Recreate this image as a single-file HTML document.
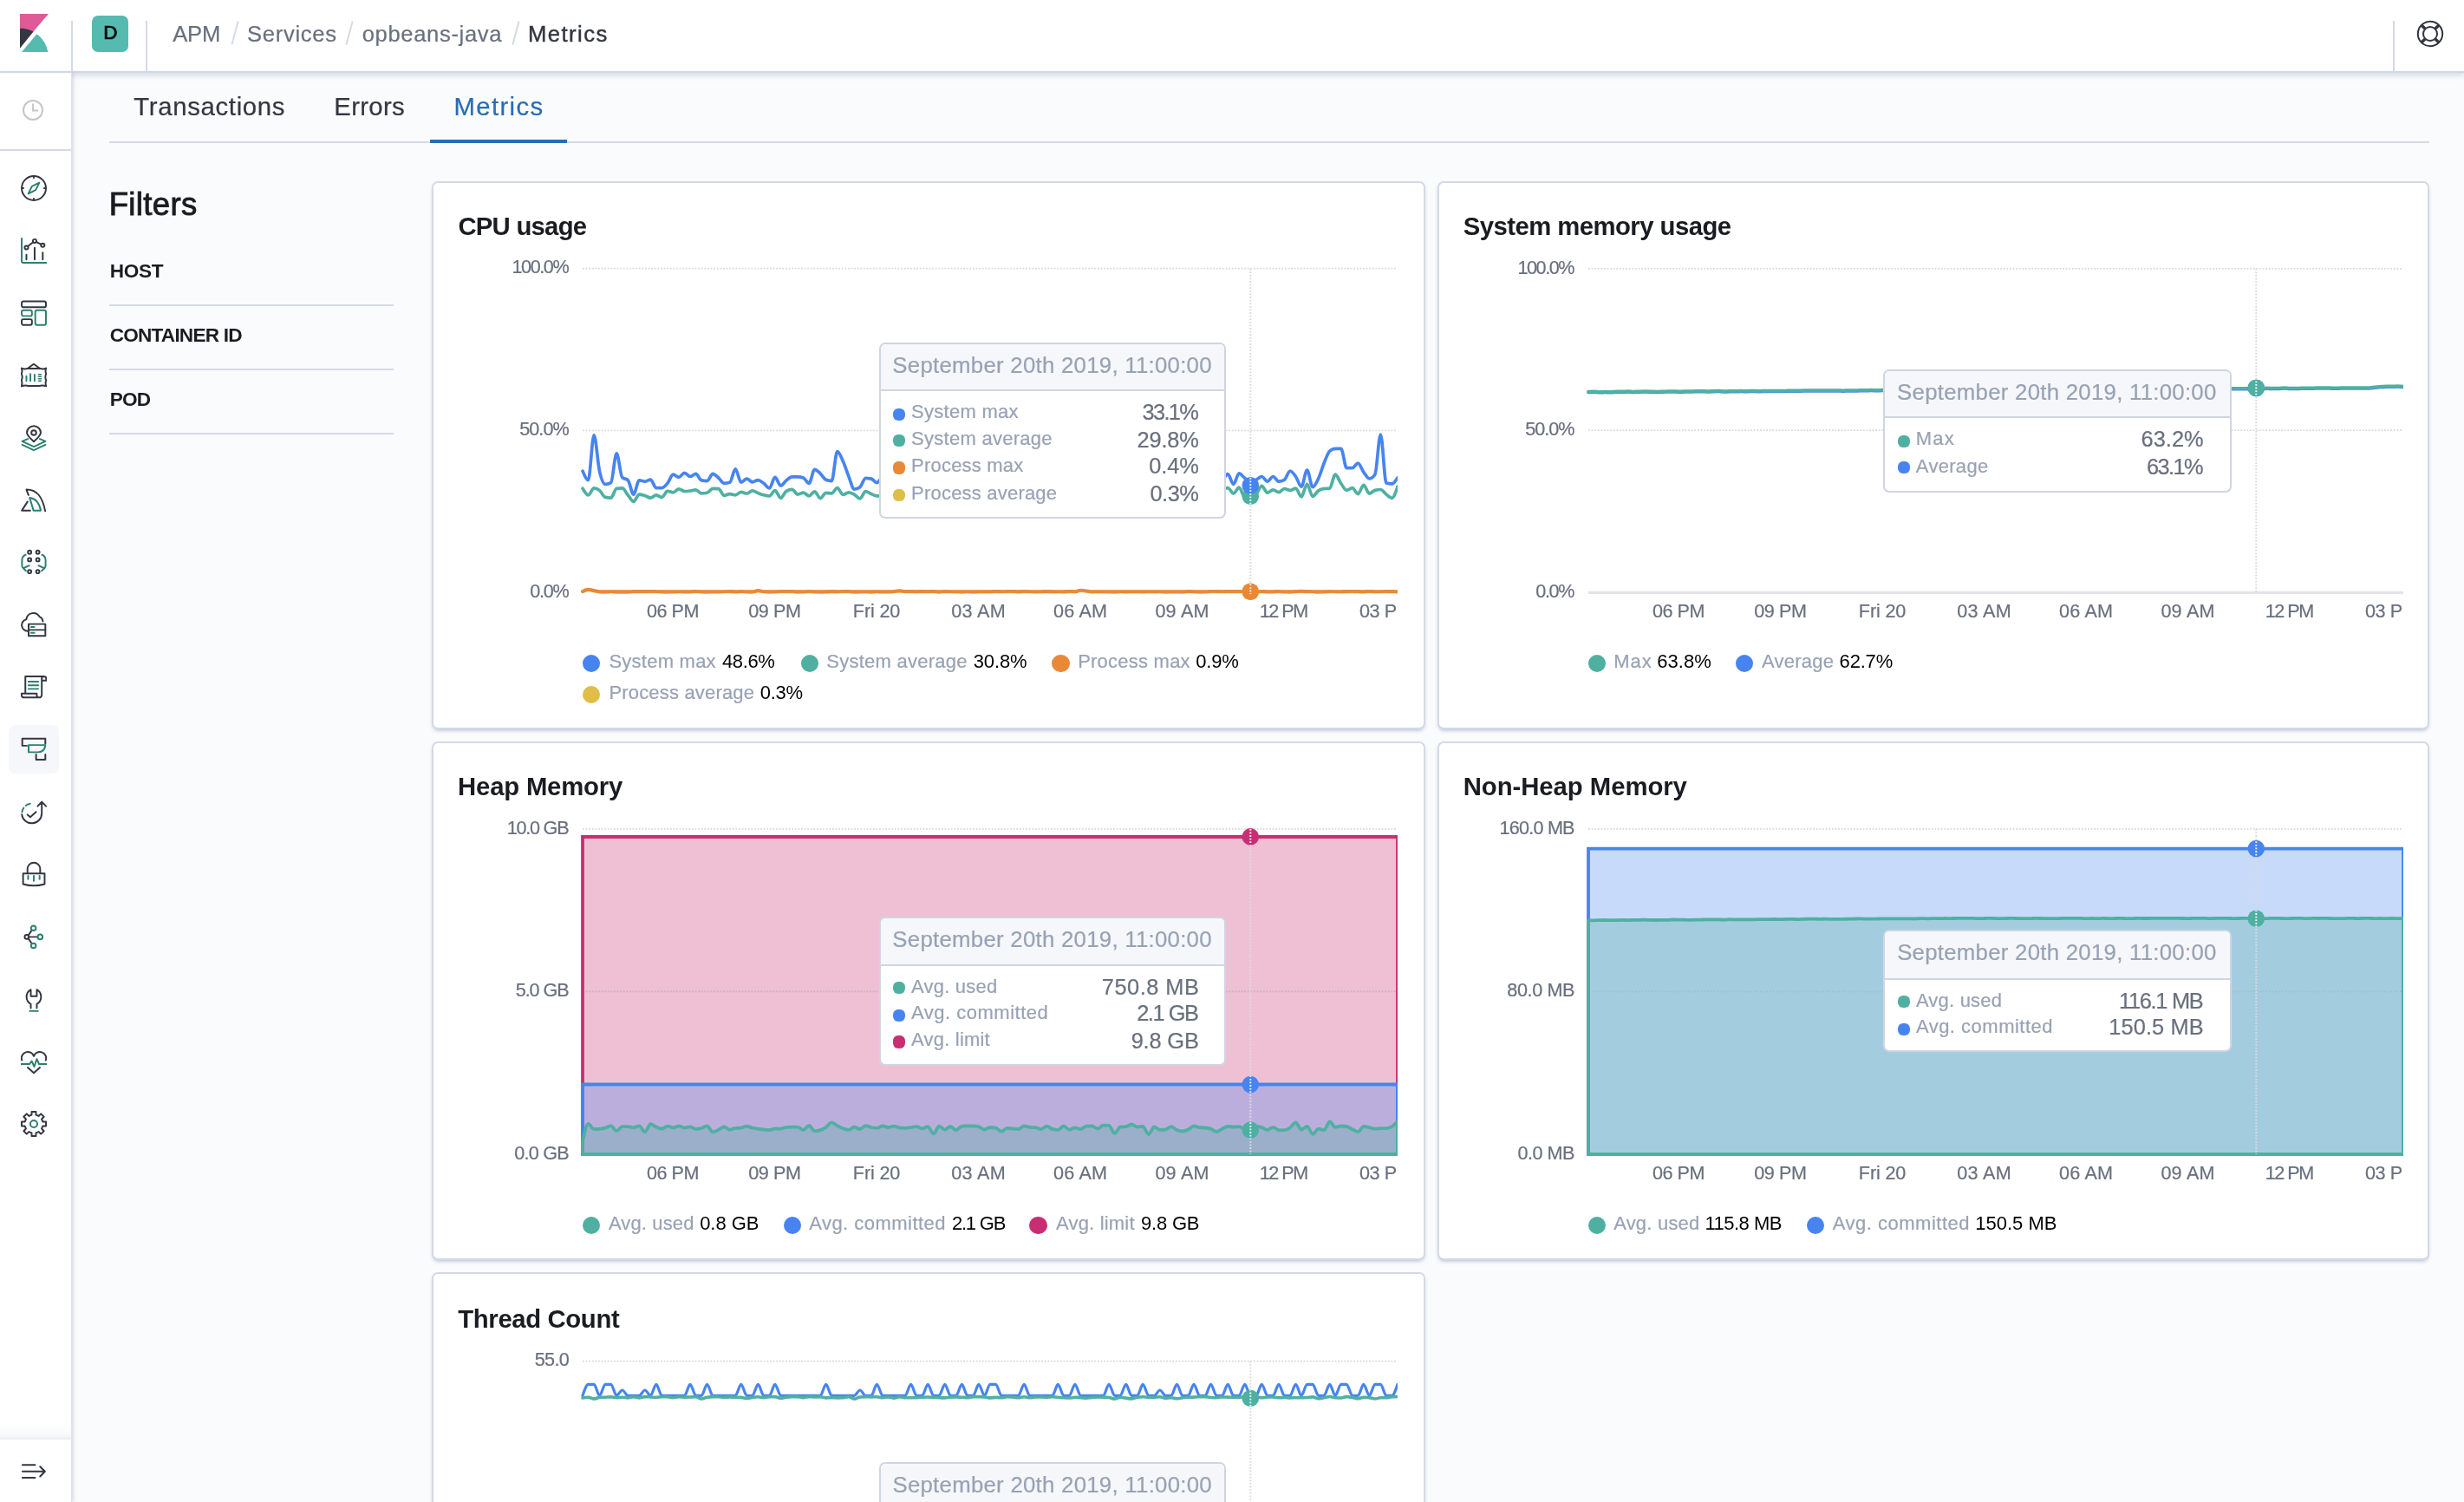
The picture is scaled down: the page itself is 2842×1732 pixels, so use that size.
<!DOCTYPE html>
<html lang="en"><head><meta charset="utf-8"><title>APM - opbeans-java - Metrics</title>
<style>
html,body{margin:0;padding:0}
body{width:2842px;height:1732px;overflow:hidden;position:relative;background:#fafbfd;font-family:"Liberation Sans",sans-serif}
.t{position:absolute;white-space:nowrap;line-height:1}
</style></head>
<body>
<div id="hdr" style="position:absolute;left:0;top:0;width:2842px;height:82px;background:#fff;border-bottom:2px solid #d0d6e3;box-shadow:0 3px 6px rgba(120,135,165,.28);z-index:5"></div>
<div id="nav" style="position:absolute;left:0;top:84px;width:82px;height:1648px;background:#fff;box-shadow:1px 0 0 #dde2ec,2px 0 5px rgba(120,135,165,.35);z-index:6"></div>
<div style="position:absolute;left:0;top:82px;width:83px;height:2px;background:#d0d6e3;z-index:7"></div>
<div style="position:absolute;left:82px;top:24px;width:2px;height:59px;background:#d3dae6;z-index:8"></div>
<div style="position:absolute;left:168px;top:24px;width:2px;height:59px;background:#d3dae6;z-index:8"></div>
<div style="position:absolute;left:2760px;top:24px;width:2px;height:59px;background:#d3dae6;z-index:8"></div>
<svg style="position:absolute;left:23px;top:16px;z-index:8" width="34" height="44" viewBox="0 0 34 44">
<path d="M0 0H33L15.6 20.3C11 18 5.6 16.8 0 16.7Z" fill="#df5a96"/>
<path d="M0 16.5C5.6 16.6 11 17.9 15.7 20.2L0 39.7Z" fill="#343741"/>
<path d="M19.4 23.2C26.2 28 30.8 35.5 32.3 44H2Z" fill="#55bbb1"/>
</svg>
<div style="position:absolute;left:106px;top:18px;width:42px;height:42px;border-radius:7px;background:#55bbb1;z-index:8"></div>
<div style="position:absolute;left:269.8px;top:24px;width:2px;height:28px;background:#d3dae6;transform:rotate(15deg);z-index:9"></div>
<div style="position:absolute;left:402px;top:24px;width:2px;height:28px;background:#d3dae6;transform:rotate(15deg);z-index:9"></div>
<div style="position:absolute;left:593.6px;top:24px;width:2px;height:28px;background:#d3dae6;transform:rotate(15deg);z-index:9"></div>
<svg style="position:absolute;left:2787px;top:23px;z-index:9" width="32" height="32" viewBox="0 0 32 32" fill="none" stroke="#343741" stroke-width="2">
<circle cx="16" cy="16" r="14.2"/><circle cx="16" cy="16" r="8"/>
<path d="M6 6L10.3 10.3M26 6L21.7 10.3M6 26L10.3 21.7M26 26L21.7 21.7" stroke-width="3.4"/>
</svg>
<svg style="position:absolute;left:25px;top:114px;z-index:9" width="26" height="26" viewBox="0 0 26 26" fill="none" stroke="#c5c6c9" stroke-width="2">
<circle cx="13" cy="13" r="11"/><path d="M13.1 5.4V13.5H19.2"/></svg>
<div style="position:absolute;left:0;top:172px;width:82px;height:2px;background:#d3dae6;z-index:9"></div>
<div style="position:absolute;left:0;top:1640px;width:82px;height:20px;background:linear-gradient(to bottom,rgba(255,255,255,0) 0%,#fcfcfd 45%,#f6f7f9 78%,#ebecf0 100%);z-index:9"></div>
<svg style="position:absolute;left:24px;top:1684px;z-index:9" width="30" height="26" viewBox="0 0 30 26" fill="none" stroke="#343741" stroke-width="2.1" stroke-linecap="round" stroke-linejoin="round">
<path d="M2 5.3H16.4M2 12.8H27.4M2 20H16.4M22.3 7.3L27.8 12.8L22.3 18.4"/></svg>
<div style="position:absolute;left:10px;top:836px;width:58px;height:56px;border-radius:8px;background:#f5f7fa;z-index:9"></div>
<svg style="position:absolute;left:24px;top:202.0px;z-index:9" width="30" height="30" viewBox="0 0 32 32"><g fill="none" stroke-width="2.1" stroke-linecap="round" stroke-linejoin="round" stroke="#343741"><circle cx="16" cy="16" r="14.9"/><path d="M16 1.5V4M16 28V30.5M1.5 16H4M28 16H30.5" stroke-linecap="butt"/></g>
<path fill="none" stroke-width="2.1" stroke-linecap="round" stroke-linejoin="round" stroke="#2b8070" d="M22.8 9.2L18.3 18.3L9.2 22.8L13.7 13.7Z" fill="#2b8070" fill-opacity=".0"/></svg>
<svg style="position:absolute;left:24px;top:273.9px;z-index:9" width="30" height="30" viewBox="0 0 32 32"><path fill="none" stroke-width="2.1" stroke-linecap="round" stroke-linejoin="round" stroke="#2b8070" d="M1.1 1V28.5A2 2 0 0 0 3.1 30.9H31.3"/>
<g fill="none" stroke-width="2.1" stroke-linecap="round" stroke-linejoin="round" stroke="#343741"><path d="M6.9 21V27M17 12.5V27M27 18.5V27" /><path d="M8.6 10.6L15.2 5.6M18.9 5.2L25.2 8.4"/><circle cx="6.9" cy="12.3" r="2.2"/><circle cx="17" cy="4.2" r="2.2"/><circle cx="27" cy="9.4" r="2.2"/></g></svg>
<svg style="position:absolute;left:24px;top:345.7px;z-index:9" width="30" height="30" viewBox="0 0 32 32"><g fill="none" stroke-width="2.1" stroke-linecap="round" stroke-linejoin="round" stroke="#343741"><rect x="1.1" y="1.6" width="29.8" height="7.2" rx="2"/><rect x="1.1" y="23.6" width="12.6" height="7" rx="2"/></g>
<g fill="none" stroke-width="2.1" stroke-linecap="round" stroke-linejoin="round" stroke="#2b8070"><rect x="1.1" y="12.6" width="12.6" height="7" rx="2"/><rect x="17.8" y="12.6" width="13.1" height="18" rx="2"/></g></svg>
<svg style="position:absolute;left:24px;top:417.6px;z-index:9" width="30" height="30" viewBox="0 0 32 32"><g fill="none" stroke-width="2.1" stroke-linecap="round" stroke-linejoin="round" stroke="#343741"><path d="M8.3 7.4L15.900 1.800L23.600 7.400"/><path d="M0.800 7C3.500 8.200 6 8.200 8.300 7.400H23.600C26 8.200 28.500 8.200 31.200 7C30.200 9.500 30 11.500 31.200 14C29.800 16.500 29.800 19 31.200 22C30 24.500 30.200 26.500 31.200 29.200C28 28 25 28 22.500 28.800H9.500C7 28 4 28 0.800 29.200C1.800 26.500 2 24.500 0.800 22C2.200 19 2.200 16.500 0.800 14C2 11.500 1.800 9.500 0.800 7Z"/></g>
<g fill="none" stroke-width="2.1" stroke-linecap="round" stroke-linejoin="round" stroke="#2b8070" stroke-linecap="butt"><path d="M6.900 16.800V22.600M11.800 14.100V22.600M17 15V22.600"/><path stroke-width="1.700" d="M21.700 14.700H25M21.700 17.400H25M21.700 20H25M21.700 22.600H25"/></g></svg>
<svg style="position:absolute;left:24px;top:489.5px;z-index:9" width="30" height="30" viewBox="0 0 32 32"><g fill="none" stroke-width="2.1" stroke-linecap="round" stroke-linejoin="round" stroke="#343741"><path d="M16 20.6C10.5 15.6 7.5 12.5 7.5 9.6A8.5 8.2 0 0 1 24.5 9.6C24.500 12.500 21.500 15.600 16 20.600Z"/><circle cx="16" cy="9.6" r="3"/></g>
<g fill="none" stroke-width="2.1" stroke-linecap="round" stroke-linejoin="round" stroke="#2b8070"><path d="M8.600 17.2L1.700 20.200L16 26.800L30.300 20.200L23.400 17.200M1.700 24.500L16 31L30.300 24.500"/></g></svg>
<svg style="position:absolute;left:24px;top:561.4px;z-index:9" width="30" height="30" viewBox="0 0 32 32"><g fill="none" stroke-width="2.1" stroke-linecap="round" stroke-linejoin="round" stroke="#343741" stroke-linecap="butt"><path d="M9.4 10.5L6.9 3.8C19.500 3.600 26.500 12 30 30.200M8.200 18.800L1.300 29.500H11.600"/></g>
<path fill="none" stroke-width="2.1" stroke-linecap="round" stroke-linejoin="round" stroke="#2b8070" d="M10.900 13.900C18.500 14.500 22.500 20 24.700 29.500H15.600Z"/></svg>
<svg style="position:absolute;left:24px;top:632.4px;z-index:9" width="30" height="30" viewBox="0 0 32 32"><g fill="none" stroke-width="2.1" stroke-linecap="round" stroke-linejoin="round" stroke="#343741"><circle cx="10.800" cy="5" r="2.100"/><circle cx="20.900" cy="5" r="2.100"/><circle cx="10.800" cy="14.300" r="2.100"/><circle cx="20.900" cy="14.300" r="2.100"/><circle cx="10.800" cy="29" r="2.100"/><circle cx="20.900" cy="29" r="2.100"/></g>
<g fill="none" stroke-width="2.1" stroke-linecap="round" stroke-linejoin="round" stroke="#2b8070"><path d="M6 8.300C2.500 9.500 1.500 12 1.500 15V21.500C1.500 23 2 24 3 24.800M10.300 21.500L3 24.800L6.300 28M26 8.300C29.500 9.500 30.500 12 30.500 15V21.500C30.500 23 30 24 29 24.800M21.700 21.500L29 24.800L25.700 28"/></g></svg>
<svg style="position:absolute;left:24px;top:705.1px;z-index:9" width="30" height="30" viewBox="0 0 32 32"><g fill="none" stroke-width="2.1" stroke-linecap="round" stroke-linejoin="round" stroke="#343741" stroke-linecap="butt"><path d="M9.400 24.200H8.500A7.300 7.300 0 0 1 6.800 9.800A8.700 8.700 0 0 1 23 6.500A7 7 0 0 1 27.200 12.300"/><rect x="9.600" y="15.600" width="20.600" height="14.600"/><path d="M9.600 22.800H30.200"/></g>
<g fill="none" stroke-width="2.1" stroke-linecap="round" stroke-linejoin="round" stroke="#2b8070" stroke-linecap="butt"><path d="M12.600 19.200H16.600M12.600 26.400H16.600"/></g></svg>
<svg style="position:absolute;left:24px;top:776.2px;z-index:9" width="30" height="30" viewBox="0 0 32 32"><g fill="none" stroke-width="2.1" stroke-linecap="round" stroke-linejoin="round" stroke="#343741"><path d="M5.600 25.400V4.200H28.300A3 3 0 0 1 31.300 7.200V9.400H25.800V27A3.200 3.200 0 0 1 22.600 30.200H4A3.200 3.200 0 0 1 .8 27V25.400H19.600V27A3 3 0 0 0 22.600 30.200M25.800 9.400V7.200A2.800 2.800 0 0 1 28.300 4.200"/></g>
<g fill="none" stroke-width="2.1" stroke-linecap="round" stroke-linejoin="round" stroke="#2b8070" stroke-linecap="butt"><path d="M9.400 10.600H21.400M9.400 15.100H21.400M9.400 19.600H21.400"/></g></svg>
<svg style="position:absolute;left:24px;top:848.8px;z-index:9" width="30" height="30" viewBox="0 0 32 32"><g fill="none" stroke-width="2.1" stroke-linecap="round" stroke-linejoin="round" stroke="#343741" stroke-linecap="butt" stroke-linejoin="miter"><path d="M7.400 11.600H1.800V3H30.200V9.200M18.800 22.400V28.800H30.200V22.400"/></g>
<path fill="none" stroke-width="2.1" stroke-linecap="round" stroke-linejoin="round" stroke="#2b8070" stroke-linejoin="miter" d="M9.600 10.800H30.200C29.800 16 26.500 19.400 21.200 19.600H9.600Z"/></svg>
<svg style="position:absolute;left:24px;top:920.7px;z-index:9" width="30" height="30" viewBox="0 0 32 32"><g fill="none" stroke-width="2.1" stroke-linecap="round" stroke-linejoin="round" stroke="#343741"><path d="M1.300 19.500A12.300 12.300 0 0 0 25.800 18V4M20.700 9.200L25.800 3.800L31 9.200M8.200 19.700L11.700 22.600L18.700 16.200"/></g>
<path fill="none" stroke-width="2.1" stroke-linecap="round" stroke-linejoin="round" stroke="#2b8070" stroke-dasharray="5.800 3.600" d="M1.500 16.500A12.300 12.300 0 0 1 14.500 5.900"/></svg>
<svg style="position:absolute;left:24px;top:992.6px;z-index:9" width="30" height="30" viewBox="0 0 32 32"><g fill="none" stroke-width="2.1" stroke-linecap="round" stroke-linejoin="round" stroke="#343741"><path d="M8.200 14.800V9.600A7.800 7.800 0 0 1 23.800 9.600V14.800M2.800 15.100H29.300V28.300C20 31 12 31 2.800 28.300Z"/></g>
<g fill="none" stroke-width="2.1" stroke-linecap="round" stroke-linejoin="round" stroke="#2b8070" stroke-linecap="butt"><path d="M9 18V22.200M16 18V24.200M23.100 18V22.200"/></g></svg>
<svg style="position:absolute;left:24px;top:1065.2px;z-index:9" width="30" height="30" viewBox="0 0 32 32"><g fill="none" stroke-width="2.1" stroke-linecap="round" stroke-linejoin="round" stroke="#343741"><circle cx="7.300" cy="16.400" r="2.500"/><path d="M9.200 14.500L13.500 8.300M10 16.400H20M9.200 18.300L13.500 24.500"/></g>
<g fill="none" stroke-width="2.1" stroke-linecap="round" stroke-linejoin="round" stroke="#2b8070"><circle cx="15.600" cy="5.600" r="3"/><circle cx="23.800" cy="16.400" r="3"/><circle cx="15.600" cy="27.200" r="3"/></g></svg>
<svg style="position:absolute;left:24px;top:1137.1px;z-index:9" width="30" height="30" viewBox="0 0 32 32"><g fill="none" stroke-width="2.1" stroke-linecap="round" stroke-linejoin="round" stroke="#343741"><path d="M12.300 4.500V12.600H19.700V4.500A10.200 10.200 0 0 1 19.700 22.300V27.200M12.300 4.500A10.200 10.200 0 0 0 12.300 22.300V27.200"/></g>
<path fill="none" stroke-width="2.1" stroke-linecap="round" stroke-linejoin="round" stroke="#2b8070" stroke-linecap="butt" d="M11 30.800H21"/></svg>
<svg style="position:absolute;left:24px;top:1209.0px;z-index:9" width="30" height="30" viewBox="0 0 32 32"><g fill="none" stroke-width="2.1" stroke-linecap="round" stroke-linejoin="round" stroke="#343741"><path d="M1.300 14.500A7.300 7.300 0 0 1 16 9.500A7.300 7.300 0 0 1 30.700 14.500M8.600 23.400L16 30.200L23.400 23.400"/></g>
<path fill="none" stroke-width="2.1" stroke-linecap="round" stroke-linejoin="round" stroke="#2b8070" d="M0.500 19.200H10.800L13.400 15.400L16.500 22.400L19.700 13L22.400 19.200H31.500"/></svg>
<svg style="position:absolute;left:24px;top:1280.9px;z-index:9" width="30" height="30" viewBox="0 0 32 32"><path fill="none" stroke-width="2.1" stroke-linecap="round" stroke-linejoin="round" stroke="#343741" d="M13.31 5.02L13.43 1.02L18.57 1.02L18.69 5.02L21.86 6.34L24.77 3.59L28.41 7.23L25.66 10.14L26.98 13.31L30.98 13.43L30.98 18.57L26.98 18.69L25.66 21.86L28.41 24.77L24.77 28.41L21.86 25.66L18.69 26.98L18.57 30.98L13.43 30.98L13.31 26.98L10.14 25.66L7.23 28.41L3.59 24.77L6.34 21.86L5.02 18.69L1.02 18.57L1.02 13.43L5.02 13.31L6.34 10.14L3.59 7.23L7.23 3.59L10.14 6.34Z"/>
<circle fill="none" stroke-width="2.1" stroke-linecap="round" stroke-linejoin="round" stroke="#2b8070" cx="16" cy="16" r="4.300"/></svg>
<div style="position:absolute;left:126px;top:163px;width:2676px;height:2px;background:#d3dae6"></div>
<div style="position:absolute;left:496px;top:161px;width:158px;height:4px;background:#2a6cb5"></div>
<div style="position:absolute;left:126px;top:351px;width:328px;height:2px;background:#d3dae6"></div>
<div style="position:absolute;left:126px;top:425px;width:328px;height:2px;background:#d3dae6"></div>
<div style="position:absolute;left:126px;top:499px;width:328px;height:2px;background:#d3dae6"></div>
<div style="position:absolute;left:498px;top:209px;width:1146px;height:632px;box-sizing:border-box;background:#fff;border:2px solid #d3dae6;border-radius:7px;box-shadow:0 3px 4px -2px rgba(140,152,175,.5),0 2px 6px -3px rgba(140,152,175,.4)"></div>
<div style="position:absolute;left:1658px;top:209px;width:1144px;height:632px;box-sizing:border-box;background:#fff;border:2px solid #d3dae6;border-radius:7px;box-shadow:0 3px 4px -2px rgba(140,152,175,.5),0 2px 6px -3px rgba(140,152,175,.4)"></div>
<div style="position:absolute;left:498px;top:855px;width:1146px;height:598px;box-sizing:border-box;background:#fff;border:2px solid #d3dae6;border-radius:7px;box-shadow:0 3px 4px -2px rgba(140,152,175,.5),0 2px 6px -3px rgba(140,152,175,.4)"></div>
<div style="position:absolute;left:1658px;top:855px;width:1144px;height:598px;box-sizing:border-box;background:#fff;border:2px solid #d3dae6;border-radius:7px;box-shadow:0 3px 4px -2px rgba(140,152,175,.5),0 2px 6px -3px rgba(140,152,175,.4)"></div>
<div style="position:absolute;left:498px;top:1467px;width:1146px;height:400px;box-sizing:border-box;background:#fff;border:2px solid #d3dae6;border-radius:7px;box-shadow:0 3px 4px -2px rgba(140,152,175,.5),0 2px 6px -3px rgba(140,152,175,.4)"></div>
<div style="position:absolute;left:1014.4px;top:395.2px;width:399.3px;height:202.9px;box-sizing:border-box;background:#fff;border:2px solid #cfd5e2;border-radius:7px;overflow:hidden;z-index:3"><div style="height:51.6px;background:#f5f7fa;border-bottom:2px solid #cfd5e2"></div></div>
<div style="position:absolute;left:1029.9px;top:470.5px;width:14.2px;height:14.6px;border-radius:42%;background:#4784f0;z-index:4"></div>
<div style="position:absolute;left:1029.9px;top:500.5px;width:14.2px;height:14.6px;border-radius:42%;background:#4fb0a1;z-index:4"></div>
<div style="position:absolute;left:1029.9px;top:532.4px;width:14.2px;height:14.6px;border-radius:42%;background:#e98938;z-index:4"></div>
<div style="position:absolute;left:1029.9px;top:563.6px;width:14.2px;height:14.6px;border-radius:42%;background:#e0be46;z-index:4"></div>
<div style="position:absolute;left:671.9px;top:754.75px;width:20.4px;height:20.4px;border-radius:50%;background:#4784f0"></div>
<div style="position:absolute;left:923.8px;top:754.75px;width:20.4px;height:20.4px;border-radius:50%;background:#4fb0a1"></div>
<div style="position:absolute;left:1213.4px;top:754.75px;width:20.4px;height:20.4px;border-radius:50%;background:#e98938"></div>
<div style="position:absolute;left:671.9px;top:790.75px;width:20.4px;height:20.4px;border-radius:50%;background:#e0be46"></div>
<div style="position:absolute;left:2172px;top:426.2px;width:401.6px;height:141.4px;box-sizing:border-box;background:#fff;border:2px solid #cfd5e2;border-radius:7px;overflow:hidden;z-index:3"><div style="height:51.5px;background:#f5f7fa;border-bottom:2px solid #cfd5e2"></div></div>
<div style="position:absolute;left:2188.65px;top:501.5px;width:14.2px;height:14.6px;border-radius:42%;background:#4fb0a1;z-index:4"></div>
<div style="position:absolute;left:2188.65px;top:531.5px;width:14.2px;height:14.6px;border-radius:42%;background:#4784f0;z-index:4"></div>
<div style="position:absolute;left:1831.8px;top:754.75px;width:20.4px;height:20.4px;border-radius:50%;background:#4fb0a1"></div>
<div style="position:absolute;left:2001.5px;top:754.75px;width:20.4px;height:20.4px;border-radius:50%;background:#4784f0"></div>
<div style="position:absolute;left:1014.4px;top:1056.6px;width:399.3px;height:172.4px;box-sizing:border-box;background:#fff;border:2px solid #cfd5e2;border-radius:7px;overflow:hidden;z-index:3"><div style="height:53.4px;background:#f5f7fa;border-bottom:2px solid #cfd5e2"></div></div>
<div style="position:absolute;left:1029.9px;top:1131.9px;width:14.2px;height:14.6px;border-radius:42%;background:#4fb0a1;z-index:4"></div>
<div style="position:absolute;left:1029.9px;top:1163.9px;width:14.2px;height:14.6px;border-radius:42%;background:#4784f0;z-index:4"></div>
<div style="position:absolute;left:1029.9px;top:1194.1px;width:14.2px;height:14.6px;border-radius:42%;background:#c92e72;z-index:4"></div>
<div style="position:absolute;left:671.8px;top:1402.65px;width:20.4px;height:20.4px;border-radius:50%;background:#4fb0a1"></div>
<div style="position:absolute;left:903.8px;top:1402.65px;width:20.4px;height:20.4px;border-radius:50%;background:#4784f0"></div>
<div style="position:absolute;left:1187.3px;top:1402.65px;width:20.4px;height:20.4px;border-radius:50%;background:#c92e72"></div>
<div style="position:absolute;left:2172px;top:1072.2px;width:401.7px;height:141.2px;box-sizing:border-box;background:#fff;border:2px solid #cfd5e2;border-radius:7px;overflow:hidden;z-index:3"><div style="height:53.8px;background:#f5f7fa;border-bottom:2px solid #cfd5e2"></div></div>
<div style="position:absolute;left:2188.7px;top:1147.5px;width:14.2px;height:14.6px;border-radius:42%;background:#4fb0a1;z-index:4"></div>
<div style="position:absolute;left:2188.7px;top:1179.5px;width:14.2px;height:14.6px;border-radius:42%;background:#4784f0;z-index:4"></div>
<div style="position:absolute;left:1831.8px;top:1402.65px;width:20.4px;height:20.4px;border-radius:50%;background:#4fb0a1"></div>
<div style="position:absolute;left:2083.5px;top:1402.65px;width:20.4px;height:20.4px;border-radius:50%;background:#4784f0"></div>
<div style="position:absolute;left:1014.4px;top:1686.1px;width:399.5px;height:141.9px;box-sizing:border-box;background:#fff;border:2px solid #cfd5e2;border-radius:7px;overflow:hidden;z-index:3"><div style="height:51.9px;background:#f5f7fa;border-bottom:2px solid #cfd5e2"></div></div>
<svg style="position:absolute;left:0;top:0;z-index:2" width="2842" height="1732" viewBox="0 0 2842 1732">
<defs><clipPath id="cl"><rect x="600" y="0" width="1012" height="1732"/></clipPath><clipPath id="cr"><rect x="1760" y="0" width="1012" height="1732"/></clipPath></defs>
<path d="M672.0 309.7H1610.0" stroke="#d9d9dc" stroke-width="1.8" stroke-dasharray="1.8 1.8" fill="none"/>
<path d="M672.0 496.4H1610.0" stroke="#d9d9dc" stroke-width="1.8" stroke-dasharray="1.8 1.8" fill="none"/>
<path d="M672.0 682.2C674.2 681.2 676.4 680.1 678.5 680.1C680.7 680.1 682.9 680.9 685.1 681.3C687.2 681.7 689.4 682.5 691.6 682.5C693.8 682.6 695.9 682.7 698.1 682.7C700.3 682.7 702.5 682.4 704.6 682.4C706.8 682.4 709.0 682.7 711.2 682.7C713.3 682.7 715.5 682.7 717.7 682.7C719.9 682.7 722.0 682.7 724.2 682.7C726.4 682.7 728.6 682.4 730.8 682.4C732.9 682.3 735.1 682.3 737.3 682.3C739.5 682.3 741.6 682.3 743.8 682.3C746.0 682.3 748.2 682.3 750.3 682.3C752.5 682.3 754.7 682.3 756.9 682.3C759.0 682.3 761.2 682.5 763.4 682.5C765.6 682.6 767.7 682.7 769.9 682.7C772.1 682.7 774.3 682.6 776.4 682.6C778.6 682.6 780.8 682.4 783.0 682.4C785.1 682.4 787.3 682.5 789.5 682.5C791.7 682.6 793.9 682.6 796.0 682.6C798.2 682.6 800.4 682.2 802.6 682.2C804.7 682.2 806.9 682.5 809.1 682.5C811.3 682.6 813.4 682.7 815.6 682.7C817.8 682.7 820.0 682.6 822.1 682.6C824.3 682.6 826.5 682.6 828.7 682.6C830.8 682.6 833.0 682.5 835.2 682.4C837.4 682.4 839.5 682.3 841.7 682.3C843.9 682.3 846.1 682.6 848.2 682.6C850.4 682.6 852.6 682.4 854.8 682.4C857.0 682.4 859.1 682.5 861.3 682.6C863.5 682.7 865.7 682.7 867.8 682.7C870.0 682.7 872.2 681.4 874.4 681.4C876.5 681.4 878.7 682.2 880.9 682.4C883.1 682.6 885.2 682.7 887.4 682.7C889.6 682.7 891.8 682.6 893.9 682.6C896.1 682.5 898.3 682.3 900.5 682.3C902.6 682.3 904.8 682.3 907.0 682.3C909.2 682.3 911.4 682.3 913.5 682.3C915.7 682.3 917.9 682.7 920.1 682.7C922.2 682.7 924.4 682.6 926.6 682.6C928.8 682.6 930.9 682.3 933.1 682.3C935.3 682.3 937.5 682.6 939.6 682.6C941.8 682.7 944.0 682.7 946.2 682.7C948.3 682.7 950.5 682.6 952.7 682.5C954.9 682.5 957.0 682.4 959.2 682.4C961.4 682.4 963.6 682.5 965.8 682.5C967.9 682.5 970.1 682.3 972.3 682.3C974.5 682.2 976.6 682.2 978.8 682.2C981.0 682.2 983.2 682.7 985.3 682.7C987.5 682.7 989.7 682.6 991.9 682.5C994.0 682.5 996.2 682.5 998.4 682.5C1000.6 682.5 1002.7 682.7 1004.9 682.7C1007.1 682.7 1009.3 682.4 1011.4 682.4C1013.6 682.4 1015.8 682.6 1018.0 682.6C1020.1 682.6 1022.3 682.6 1024.5 682.6C1026.7 682.6 1028.9 682.5 1031.0 682.3C1033.2 682.1 1035.4 681.5 1037.6 681.5C1039.7 681.5 1041.9 682.3 1044.1 682.3C1046.3 682.3 1048.4 682.3 1050.6 682.3C1052.8 682.3 1055.0 682.5 1057.1 682.5C1059.3 682.5 1061.5 682.3 1063.7 682.3C1065.8 682.3 1068.0 682.4 1070.2 682.4C1072.4 682.4 1074.5 682.3 1076.7 682.3C1078.9 682.3 1081.1 682.7 1083.2 682.7C1085.4 682.7 1087.6 682.4 1089.8 682.4C1092.0 682.4 1094.1 682.4 1096.3 682.4C1098.5 682.4 1100.7 682.5 1102.8 682.5C1105.0 682.5 1107.2 682.7 1109.4 682.7C1111.5 682.7 1113.7 682.4 1115.9 682.4C1118.1 682.4 1120.2 682.7 1122.4 682.7C1124.6 682.7 1126.8 682.5 1128.9 682.5C1131.1 682.5 1133.3 682.5 1135.5 682.5C1137.6 682.5 1139.8 682.5 1142.0 682.5C1144.2 682.5 1146.4 682.2 1148.5 682.2C1150.7 682.2 1152.9 682.4 1155.1 682.4C1157.2 682.4 1159.4 682.3 1161.6 682.3C1163.8 682.3 1165.9 682.2 1168.1 682.2C1170.3 682.2 1172.5 682.6 1174.6 682.6C1176.8 682.6 1179.0 682.3 1181.2 682.3C1183.3 682.3 1185.5 682.4 1187.7 682.4C1189.9 682.5 1192.0 682.6 1194.2 682.6C1196.4 682.6 1198.6 682.5 1200.8 682.5C1202.9 682.4 1205.1 682.4 1207.3 682.4C1209.5 682.4 1211.6 682.4 1213.8 682.5C1216.0 682.5 1218.2 682.5 1220.3 682.5C1222.5 682.5 1224.7 682.6 1226.9 682.6C1229.0 682.6 1231.2 682.3 1233.4 682.3C1235.6 682.3 1237.7 682.5 1239.9 682.5C1242.1 682.5 1244.3 680.9 1246.4 680.9C1248.6 680.9 1250.8 681.5 1253.0 681.7C1255.1 682.0 1257.3 682.6 1259.5 682.6C1261.7 682.6 1263.9 682.5 1266.0 682.5C1268.2 682.5 1270.4 682.5 1272.6 682.5C1274.7 682.5 1276.9 682.6 1279.1 682.6C1281.3 682.6 1283.4 682.7 1285.6 682.7C1287.8 682.7 1290.0 682.4 1292.1 682.4C1294.3 682.4 1296.5 682.5 1298.7 682.5C1300.8 682.5 1303.0 682.5 1305.2 682.5C1307.4 682.5 1309.5 682.5 1311.7 682.5C1313.9 682.5 1316.1 682.5 1318.2 682.5C1320.4 682.5 1322.6 682.4 1324.8 682.4C1327.0 682.4 1329.1 682.5 1331.3 682.5C1333.5 682.5 1335.7 682.4 1337.8 682.4C1340.0 682.4 1342.2 682.7 1344.4 682.7C1346.5 682.7 1348.7 682.5 1350.9 682.5C1353.1 682.5 1355.2 682.6 1357.4 682.6C1359.6 682.7 1361.8 682.7 1363.9 682.7C1366.1 682.7 1368.3 682.3 1370.5 682.3C1372.6 682.3 1374.8 682.4 1377.0 682.5C1379.2 682.5 1381.4 682.7 1383.5 682.7C1385.7 682.7 1387.9 682.7 1390.1 682.6C1392.2 682.6 1394.4 682.3 1396.6 682.3C1398.8 682.3 1400.9 682.3 1403.1 682.3C1405.3 682.3 1407.5 682.4 1409.6 682.4C1411.8 682.4 1414.0 682.2 1416.2 682.2C1418.3 682.2 1420.5 682.3 1422.7 682.3C1424.9 682.3 1427.0 682.2 1429.2 682.2C1431.4 682.2 1433.6 682.5 1435.8 682.5C1437.9 682.6 1440.1 682.6 1442.3 682.6C1444.5 682.6 1446.6 682.6 1448.8 682.6C1451.0 682.6 1453.2 682.3 1455.3 682.3C1457.5 682.3 1459.7 682.6 1461.9 682.6C1464.0 682.6 1466.2 682.5 1468.4 682.5C1470.6 682.5 1472.7 682.3 1474.9 682.3C1477.1 682.3 1479.3 682.6 1481.4 682.6C1483.6 682.7 1485.8 682.7 1488.0 682.7C1490.1 682.7 1492.3 682.4 1494.5 682.3C1496.7 682.2 1498.9 682.1 1501.0 682.1C1503.2 682.1 1505.4 682.4 1507.6 682.4C1509.7 682.4 1511.9 682.4 1514.1 682.4C1516.3 682.5 1518.4 682.7 1520.6 682.7C1522.8 682.7 1525.0 682.7 1527.1 682.6C1529.3 682.6 1531.5 682.3 1533.7 682.3C1535.8 682.3 1538.0 682.4 1540.2 682.4C1542.4 682.4 1544.5 682.5 1546.7 682.5C1548.9 682.5 1551.1 682.4 1553.2 682.4C1555.4 682.3 1557.6 682.3 1559.8 682.3C1562.0 682.3 1564.1 682.3 1566.3 682.4C1568.5 682.4 1570.7 682.6 1572.8 682.6C1575.0 682.6 1577.2 682.2 1579.4 682.2C1581.5 682.2 1583.7 682.5 1585.9 682.5C1588.1 682.5 1590.2 682.5 1592.4 682.4C1594.6 682.4 1596.8 682.2 1598.9 682.2C1601.1 682.2 1603.3 682.3 1605.5 682.4C1607.6 682.4 1609.8 682.5 1612.0 682.5" fill="none" stroke="#e0be46" stroke-width="3.9" stroke-linejoin="round" stroke-linecap="round" clip-path="url(#cl)"/>
<path d="M672.0 681.9C674.2 680.8 676.4 679.8 678.5 679.8C680.7 679.8 682.9 680.6 685.1 681.0C687.2 681.4 689.4 682.1 691.6 682.2C693.8 682.3 695.9 682.3 698.1 682.3C700.3 682.3 702.5 682.1 704.6 682.1C706.8 682.1 709.0 682.3 711.2 682.3C713.3 682.3 715.5 682.3 717.7 682.3C719.9 682.3 722.0 682.3 724.2 682.3C726.4 682.3 728.6 682.1 730.8 682.0C732.9 682.0 735.1 682.0 737.3 682.0C739.5 682.0 741.6 682.0 743.8 682.0C746.0 682.0 748.2 681.9 750.3 681.9C752.5 681.9 754.7 681.9 756.9 682.0C759.0 682.0 761.2 682.1 763.4 682.2C765.6 682.2 767.7 682.3 769.9 682.3C772.1 682.3 774.3 682.3 776.4 682.3C778.6 682.3 780.8 682.1 783.0 682.1C785.1 682.1 787.3 682.1 789.5 682.2C791.7 682.2 793.9 682.2 796.0 682.2C798.2 682.2 800.4 681.9 802.6 681.9C804.7 681.9 806.9 682.1 809.1 682.2C811.3 682.2 813.4 682.3 815.6 682.3C817.8 682.3 820.0 682.3 822.1 682.2C824.3 682.2 826.5 682.2 828.7 682.2C830.8 682.2 833.0 682.1 835.2 682.1C837.4 682.0 839.5 681.9 841.7 681.9C843.9 681.9 846.1 682.2 848.2 682.2C850.4 682.2 852.6 682.0 854.8 682.0C857.0 682.0 859.1 682.2 861.3 682.3C863.5 682.3 865.7 682.3 867.8 682.3C870.0 682.3 872.2 681.0 874.4 681.0C876.5 681.0 878.7 681.9 880.9 682.1C883.1 682.2 885.2 682.3 887.4 682.3C889.6 682.3 891.8 682.3 893.9 682.2C896.1 682.1 898.3 681.9 900.5 681.9C902.6 681.9 904.8 681.9 907.0 681.9C909.2 681.9 911.4 681.9 913.5 681.9C915.7 681.9 917.9 682.3 920.1 682.3C922.2 682.3 924.4 682.3 926.6 682.3C928.8 682.2 930.9 681.9 933.1 681.9C935.3 681.9 937.5 682.2 939.6 682.3C941.8 682.3 944.0 682.3 946.2 682.3C948.3 682.3 950.5 682.2 952.7 682.2C954.9 682.1 957.0 682.0 959.2 682.0C961.4 682.0 963.6 682.1 965.8 682.1C967.9 682.1 970.1 682.0 972.3 681.9C974.5 681.9 976.6 681.9 978.8 681.9C981.0 681.9 983.2 682.3 985.3 682.3C987.5 682.3 989.7 682.2 991.9 682.2C994.0 682.1 996.2 682.1 998.4 682.1C1000.6 682.1 1002.7 682.3 1004.9 682.3C1007.1 682.3 1009.3 682.1 1011.4 682.1C1013.6 682.1 1015.8 682.3 1018.0 682.3C1020.1 682.3 1022.3 682.3 1024.5 682.3C1026.7 682.2 1028.9 682.1 1031.0 682.0C1033.2 681.8 1035.4 681.2 1037.6 681.2C1039.7 681.2 1041.9 682.0 1044.1 682.0C1046.3 682.0 1048.4 682.0 1050.6 682.0C1052.8 682.0 1055.0 682.1 1057.1 682.1C1059.3 682.1 1061.5 682.0 1063.7 682.0C1065.8 682.0 1068.0 682.1 1070.2 682.1C1072.4 682.1 1074.5 681.9 1076.7 681.9C1078.9 681.9 1081.1 682.3 1083.2 682.3C1085.4 682.3 1087.6 682.0 1089.8 682.0C1092.0 682.0 1094.1 682.1 1096.3 682.1C1098.5 682.1 1100.7 682.1 1102.8 682.1C1105.0 682.2 1107.2 682.3 1109.4 682.3C1111.5 682.3 1113.7 682.1 1115.9 682.1C1118.1 682.1 1120.2 682.3 1122.4 682.3C1124.6 682.3 1126.8 682.1 1128.9 682.1C1131.1 682.1 1133.3 682.1 1135.5 682.1C1137.6 682.1 1139.8 682.1 1142.0 682.1C1144.2 682.1 1146.4 681.9 1148.5 681.9C1150.7 681.9 1152.9 682.1 1155.1 682.1C1157.2 682.1 1159.4 682.0 1161.6 681.9C1163.8 681.9 1165.9 681.9 1168.1 681.9C1170.3 681.9 1172.5 682.2 1174.6 682.2C1176.8 682.2 1179.0 681.9 1181.2 681.9C1183.3 681.9 1185.5 682.0 1187.7 682.1C1189.9 682.1 1192.0 682.2 1194.2 682.2C1196.4 682.2 1198.6 682.2 1200.8 682.1C1202.9 682.1 1205.1 682.0 1207.3 682.0C1209.5 682.0 1211.6 682.1 1213.8 682.1C1216.0 682.1 1218.2 682.1 1220.3 682.1C1222.5 682.1 1224.7 682.2 1226.9 682.2C1229.0 682.2 1231.2 681.9 1233.4 681.9C1235.6 681.9 1237.7 682.1 1239.9 682.1C1242.1 682.1 1244.3 680.6 1246.4 680.6C1248.6 680.6 1250.8 681.1 1253.0 681.4C1255.1 681.7 1257.3 682.2 1259.5 682.2C1261.7 682.2 1263.9 682.1 1266.0 682.1C1268.2 682.1 1270.4 682.1 1272.6 682.1C1274.7 682.1 1276.9 682.2 1279.1 682.2C1281.3 682.3 1283.4 682.3 1285.6 682.3C1287.8 682.3 1290.0 682.1 1292.1 682.1C1294.3 682.1 1296.5 682.2 1298.7 682.2C1300.8 682.2 1303.0 682.1 1305.2 682.1C1307.4 682.1 1309.5 682.1 1311.7 682.1C1313.9 682.1 1316.1 682.2 1318.2 682.2C1320.4 682.2 1322.6 682.1 1324.8 682.1C1327.0 682.1 1329.1 682.1 1331.3 682.1C1333.5 682.1 1335.7 682.1 1337.8 682.1C1340.0 682.1 1342.2 682.3 1344.4 682.3C1346.5 682.3 1348.7 682.2 1350.9 682.2C1353.1 682.2 1355.2 682.3 1357.4 682.3C1359.6 682.3 1361.8 682.3 1363.9 682.3C1366.1 682.3 1368.3 682.0 1370.5 682.0C1372.6 682.0 1374.8 682.1 1377.0 682.1C1379.2 682.2 1381.4 682.3 1383.5 682.3C1385.7 682.3 1387.9 682.3 1390.1 682.3C1392.2 682.2 1394.4 681.9 1396.6 681.9C1398.8 681.9 1400.9 681.9 1403.1 681.9C1405.3 681.9 1407.5 682.1 1409.6 682.1C1411.8 682.1 1414.0 681.9 1416.2 681.9C1418.3 681.9 1420.5 682.0 1422.7 682.0C1424.9 682.0 1427.0 681.9 1429.2 681.9C1431.4 681.9 1433.6 682.1 1435.8 682.2C1437.9 682.2 1440.1 682.2 1442.3 682.2C1444.5 682.3 1446.6 682.3 1448.8 682.3C1451.0 682.3 1453.2 681.9 1455.3 681.9C1457.5 681.9 1459.7 682.2 1461.9 682.2C1464.0 682.2 1466.2 682.2 1468.4 682.2C1470.6 682.2 1472.7 681.9 1474.9 681.9C1477.1 681.9 1479.3 682.3 1481.4 682.3C1483.6 682.3 1485.8 682.3 1488.0 682.3C1490.1 682.3 1492.3 682.1 1494.5 682.0C1496.7 681.9 1498.9 681.7 1501.0 681.7C1503.2 681.7 1505.4 682.0 1507.6 682.0C1509.7 682.1 1511.9 682.1 1514.1 682.1C1516.3 682.1 1518.4 682.3 1520.6 682.3C1522.8 682.3 1525.0 682.3 1527.1 682.3C1529.3 682.2 1531.5 681.9 1533.7 681.9C1535.8 681.9 1538.0 682.0 1540.2 682.1C1542.4 682.1 1544.5 682.1 1546.7 682.1C1548.9 682.1 1551.1 682.0 1553.2 682.0C1555.4 682.0 1557.6 681.9 1559.8 681.9C1562.0 681.9 1564.1 682.0 1566.3 682.0C1568.5 682.1 1570.7 682.2 1572.8 682.2C1575.0 682.2 1577.2 681.9 1579.4 681.9C1581.5 681.9 1583.7 682.1 1585.9 682.1C1588.1 682.1 1590.2 682.1 1592.4 682.1C1594.6 682.0 1596.8 681.9 1598.9 681.9C1601.1 681.9 1603.3 682.0 1605.5 682.0C1607.6 682.1 1609.8 682.1 1612.0 682.2" fill="none" stroke="#e98938" stroke-width="3.9" stroke-linejoin="round" stroke-linecap="round" clip-path="url(#cl)"/>
<path d="M672.0 563.3C674.2 567.1 676.4 570.8 678.5 570.8C680.7 570.8 682.9 562.9 685.1 562.9C687.2 562.9 689.4 563.8 691.6 565.6C693.8 567.3 695.9 572.9 698.1 573.4C700.3 573.9 702.5 574.1 704.6 574.1C706.8 574.1 709.0 563.6 711.2 563.3C713.3 563.0 715.5 562.9 717.7 562.9C719.9 562.9 722.0 568.3 724.2 570.8C726.4 573.4 728.6 578.3 730.8 578.3C732.9 578.3 735.1 570.1 737.3 570.1C739.5 570.1 741.6 570.9 743.8 571.6C746.0 572.3 748.2 574.1 750.3 574.1C752.5 574.1 754.7 570.8 756.9 570.8C759.0 570.8 761.2 573.4 763.4 573.4C765.6 573.4 767.7 566.3 769.9 566.3C772.1 566.3 774.3 567.8 776.4 567.8C778.6 567.8 780.8 563.8 783.0 563.8C785.1 563.8 787.3 566.6 789.5 566.6C791.7 566.6 793.9 566.3 796.0 566.0C798.2 565.7 800.4 564.8 802.6 564.8C804.7 564.8 806.9 568.9 809.1 568.9C811.3 568.9 813.4 568.7 815.6 568.3C817.8 567.9 820.0 563.3 822.1 563.3C824.3 563.3 826.5 563.4 828.7 563.6C830.8 563.8 833.0 571.3 835.2 571.3C837.4 571.3 839.5 569.6 841.7 569.6C843.9 569.6 846.1 570.8 848.2 570.8C850.4 570.8 852.6 567.4 854.8 567.4C857.0 567.4 859.1 569.0 861.3 569.0C863.5 569.0 865.7 565.9 867.8 565.9C870.0 565.9 872.2 567.8 874.4 568.6C876.5 569.4 878.7 570.3 880.9 570.8C883.1 571.4 885.2 571.9 887.4 571.9C889.6 571.9 891.8 565.6 893.9 565.6C896.1 565.6 898.3 574.3 900.5 574.3C902.6 574.3 904.8 567.6 907.0 566.3C909.2 565.0 911.4 564.4 913.5 564.4C915.7 564.4 917.9 570.1 920.1 570.1C922.2 570.1 924.4 568.1 926.6 568.1C928.8 568.1 930.9 571.9 933.1 571.9C935.3 571.9 937.5 566.8 939.6 566.8C941.8 566.8 944.0 574.6 946.2 574.6C948.3 574.6 950.5 568.3 952.7 568.3C954.9 568.3 957.0 568.9 959.2 568.9C961.4 568.9 963.6 562.6 965.8 562.6C967.9 562.6 970.1 570.4 972.3 570.4C974.5 570.4 976.6 567.8 978.8 567.8C981.0 567.8 983.2 568.9 985.3 570.1C987.5 571.3 989.7 575.0 991.9 575.0C994.0 575.0 996.2 566.6 998.4 566.6C1000.6 566.6 1002.7 568.8 1004.9 569.6C1007.1 570.5 1009.3 571.9 1011.4 571.9C1013.6 571.9 1015.8 571.8 1018.0 571.6C1020.1 571.4 1022.3 571.2 1024.5 570.5C1026.7 569.9 1028.9 568.7 1031.0 567.7C1033.2 566.6 1035.4 564.4 1037.6 564.4C1039.7 564.4 1041.9 564.8 1044.1 564.9C1046.3 565.1 1048.4 565.0 1050.6 565.2C1052.8 565.5 1055.0 573.3 1057.1 573.5C1059.3 573.7 1061.5 573.8 1063.7 573.8C1065.8 573.8 1068.0 566.9 1070.2 566.9C1072.4 566.9 1074.5 567.0 1076.7 567.1C1078.9 567.2 1081.1 569.8 1083.2 569.8C1085.4 569.8 1087.6 569.7 1089.8 569.5C1092.0 569.3 1094.1 566.1 1096.3 566.1C1098.5 566.1 1100.7 567.1 1102.8 567.1C1105.0 567.1 1107.2 567.1 1109.4 567.0C1111.5 566.9 1113.7 566.4 1115.9 566.4C1118.1 566.4 1120.2 572.1 1122.4 572.8C1124.6 573.5 1126.8 573.8 1128.9 573.8C1131.1 573.8 1133.3 573.1 1135.5 571.6C1137.6 570.1 1139.8 564.4 1142.0 564.4C1144.2 564.4 1146.4 568.9 1148.5 569.7C1150.7 570.5 1152.9 571.0 1155.1 571.0C1157.2 571.0 1159.4 568.6 1161.6 568.6C1163.8 568.6 1165.9 568.6 1168.1 568.7C1170.3 568.9 1172.5 570.4 1174.6 571.0C1176.8 571.6 1179.0 572.2 1181.2 572.2C1183.3 572.2 1185.5 571.7 1187.7 570.7C1189.9 569.7 1192.0 565.7 1194.2 565.7C1196.4 565.7 1198.6 571.7 1200.8 571.7C1202.9 571.7 1205.1 567.9 1207.3 567.9C1209.5 567.9 1211.6 568.1 1213.8 568.5C1216.0 568.9 1218.2 572.2 1220.3 572.2C1222.5 572.2 1224.7 568.2 1226.9 568.2C1229.0 568.2 1231.2 573.6 1233.4 573.6C1235.6 573.6 1237.7 566.3 1239.9 566.3C1242.1 566.3 1244.3 569.9 1246.4 569.9C1248.6 569.9 1250.8 568.2 1253.0 568.2C1255.1 568.2 1257.3 573.5 1259.5 573.5C1261.7 573.5 1263.9 570.2 1266.0 570.2C1268.2 570.2 1270.4 573.0 1272.6 573.0C1274.7 573.0 1276.9 572.7 1279.1 572.0C1281.3 571.3 1283.4 565.3 1285.6 565.0C1287.8 564.8 1290.0 564.7 1292.1 564.7C1294.3 564.7 1296.5 567.4 1298.7 567.4C1300.8 567.4 1303.0 566.0 1305.2 565.5C1307.4 565.0 1309.5 564.3 1311.7 564.3C1313.9 564.3 1316.1 564.9 1318.2 565.5C1320.4 566.0 1322.6 566.2 1324.8 567.6C1327.0 569.0 1329.1 573.9 1331.3 573.9C1333.5 573.9 1335.7 564.9 1337.8 564.9C1340.0 564.9 1342.2 566.6 1344.4 566.6C1346.5 566.6 1348.7 564.2 1350.9 564.2C1353.1 564.2 1355.2 564.6 1357.4 565.5C1359.6 566.3 1361.8 568.4 1363.9 569.3C1366.1 570.2 1368.3 571.0 1370.5 571.0C1372.6 571.0 1374.8 565.7 1377.0 565.7C1379.2 565.7 1381.4 571.6 1383.5 571.8C1385.7 572.0 1387.9 572.1 1390.1 572.1C1392.2 572.1 1394.4 572.1 1396.6 572.1C1398.8 572.0 1400.9 567.6 1403.1 566.3C1405.3 565.0 1407.5 564.9 1409.6 564.3C1411.8 563.7 1414.0 562.6 1416.2 562.6C1418.3 562.6 1420.5 569.1 1422.7 569.1C1424.9 569.1 1427.0 562.1 1429.2 562.1C1431.4 562.1 1433.6 573.3 1435.8 573.3C1437.9 573.3 1440.1 572.6 1442.3 571.9C1444.5 571.3 1446.6 571.2 1448.8 569.6C1451.0 568.1 1453.2 560.3 1455.3 560.3C1457.5 560.3 1459.7 568.2 1461.9 568.2C1464.0 568.2 1466.2 564.9 1468.4 564.9C1470.6 564.9 1472.7 567.7 1474.9 567.7C1477.1 567.7 1479.3 563.5 1481.4 563.5C1483.6 563.5 1485.8 565.4 1488.0 565.4C1490.1 565.4 1492.3 563.1 1494.5 563.1C1496.7 563.1 1498.9 572.9 1501.0 572.9C1503.2 572.9 1505.4 558.4 1507.6 558.4C1509.7 558.4 1511.9 572.4 1514.1 572.4C1516.3 572.4 1518.4 567.4 1520.6 565.9C1522.8 564.4 1525.0 563.9 1527.1 563.5C1529.3 563.2 1531.5 563.4 1533.7 563.1C1535.8 562.8 1538.0 547.2 1540.2 547.2C1542.4 547.2 1544.5 554.4 1546.7 557.5C1548.9 560.5 1551.1 565.4 1553.2 565.4C1555.4 565.4 1557.6 562.6 1559.8 562.6C1562.0 562.6 1564.1 569.6 1566.3 569.6C1568.5 569.6 1570.7 559.3 1572.8 559.3C1575.0 559.3 1577.2 569.1 1579.4 569.1C1581.5 569.1 1583.7 566.0 1585.9 565.4C1588.1 564.8 1590.2 564.5 1592.4 564.5C1594.6 564.5 1596.8 568.4 1598.9 570.1C1601.1 571.7 1603.3 574.3 1605.5 574.3C1607.6 574.3 1609.8 567.7 1612.0 561.2" fill="none" stroke="#4fb0a1" stroke-width="3.7" stroke-linejoin="round" stroke-linecap="round" clip-path="url(#cl)"/>
<path d="M672.0 543.1C674.2 548.3 676.4 553.6 678.5 553.6C680.7 553.6 682.9 501.8 685.1 501.8C687.2 501.8 689.4 534.4 691.6 543.8C693.8 553.2 695.9 558.4 698.1 558.4C700.3 558.4 702.5 557.8 704.6 556.6C706.8 555.4 709.0 522.8 711.2 522.8C713.3 522.8 715.5 548.6 717.7 550.6C719.9 552.6 722.0 551.6 724.2 553.6C726.4 555.6 728.6 570.1 730.8 570.1C732.9 570.1 735.1 553.9 737.3 553.9C739.5 553.9 741.6 555.1 743.8 555.1C746.0 555.1 748.2 553.1 750.3 553.1C752.5 553.1 754.7 562.6 756.9 562.6C759.0 562.6 761.2 562.6 763.4 562.6C765.6 562.6 767.7 559.9 769.9 557.3C772.1 554.7 774.3 547.1 776.4 547.1C778.6 547.1 780.8 550.3 783.0 550.3C785.1 550.3 787.3 545.3 789.5 545.3C791.7 545.3 793.9 549.5 796.0 549.5C798.2 549.5 800.4 546.4 802.6 546.4C804.7 546.4 806.9 553.4 809.1 553.9C811.3 554.4 813.4 554.6 815.6 554.6C817.8 554.6 820.0 546.4 822.1 546.4C824.3 546.4 826.5 549.2 828.7 551.0C830.8 552.8 833.0 557.3 835.2 557.3C837.4 557.3 839.5 557.0 841.7 556.3C843.9 555.6 846.1 540.8 848.2 540.8C850.4 540.8 852.6 556.1 854.8 556.1C857.0 556.1 859.1 552.1 861.3 552.1C863.5 552.1 865.7 555.8 867.8 555.8C870.0 555.8 872.2 553.6 874.4 553.6C876.5 553.6 878.7 555.8 880.9 557.3C883.1 558.9 885.2 563.0 887.4 563.0C889.6 563.0 891.8 550.3 893.9 550.3C896.1 550.3 898.3 560.0 900.5 560.0C902.6 560.0 904.8 555.7 907.0 554.0C909.2 552.3 911.4 549.8 913.5 549.8C915.7 549.8 917.9 549.8 920.1 549.8C922.2 549.8 924.4 550.2 926.6 551.0C928.8 551.8 930.9 557.3 933.1 557.3C935.3 557.3 937.5 541.3 939.6 541.3C941.8 541.3 944.0 544.1 946.2 546.1C948.3 548.1 950.5 552.4 952.7 553.3C954.9 554.2 957.0 554.6 959.2 554.6C961.4 554.6 963.6 520.5 965.8 520.5C967.9 520.5 970.1 527.0 972.3 531.8C974.5 536.6 976.6 543.7 978.8 549.1C981.0 554.4 983.2 564.1 985.3 564.1C987.5 564.1 989.7 563.3 991.9 561.8C994.0 560.3 996.2 551.3 998.4 551.3C1000.6 551.3 1002.7 551.6 1004.9 552.1C1007.1 552.6 1009.3 556.6 1011.4 556.6C1013.6 556.6 1015.8 550.6 1018.0 550.6C1020.1 550.6 1022.3 551.2 1024.5 551.2C1026.7 551.2 1028.9 547.3 1031.0 547.2C1033.2 547.0 1035.4 547.1 1037.6 546.9C1039.7 546.8 1041.9 534.9 1044.1 534.9C1046.3 534.9 1048.4 552.8 1050.6 552.8C1052.8 552.8 1055.0 549.6 1057.1 549.6C1059.3 549.6 1061.5 555.2 1063.7 555.2C1065.8 555.2 1068.0 546.7 1070.2 546.7C1072.4 546.7 1074.5 547.3 1076.7 548.3C1078.9 549.3 1081.1 559.1 1083.2 559.1C1085.4 559.1 1087.6 558.1 1089.8 556.2C1092.0 554.3 1094.1 529.0 1096.3 529.0C1098.5 529.0 1100.7 556.9 1102.8 556.9C1105.0 556.9 1107.2 555.4 1109.4 555.4C1111.5 555.4 1113.7 558.7 1115.9 558.7C1118.1 558.7 1120.2 555.2 1122.4 555.2C1124.6 555.2 1126.8 557.7 1128.9 557.7C1131.1 557.7 1133.3 547.9 1135.5 547.9C1137.6 547.9 1139.8 548.1 1142.0 548.4C1144.2 548.8 1146.4 554.8 1148.5 556.7C1150.7 558.6 1152.9 560.0 1155.1 560.0C1157.2 560.0 1159.4 555.5 1161.6 555.5C1163.8 555.5 1165.9 559.4 1168.1 559.4C1170.3 559.4 1172.5 538.6 1174.6 538.6C1176.8 538.6 1179.0 556.4 1181.2 556.4C1183.3 556.4 1185.5 552.2 1187.7 550.6C1189.9 548.9 1192.0 549.2 1194.2 546.4C1196.4 543.6 1198.6 529.9 1200.8 529.9C1202.9 529.9 1205.1 543.1 1207.3 548.1C1209.5 553.1 1211.6 559.9 1213.8 559.9C1216.0 559.9 1218.2 554.8 1220.3 554.8C1222.5 554.8 1224.7 559.8 1226.9 559.8C1229.0 559.8 1231.2 553.6 1233.4 551.7C1235.6 549.8 1237.7 548.4 1239.9 548.4C1242.1 548.4 1244.3 549.7 1246.4 549.7C1248.6 549.7 1250.8 532.2 1253.0 532.2C1255.1 532.2 1257.3 548.5 1259.5 551.9C1261.7 555.3 1263.9 557.0 1266.0 557.0C1268.2 557.0 1270.4 538.8 1272.6 538.8C1274.7 538.8 1276.9 558.5 1279.1 558.5C1281.3 558.5 1283.4 555.7 1285.6 552.3C1287.8 548.9 1290.0 538.1 1292.1 538.1C1294.3 538.1 1296.5 549.3 1298.7 549.3C1300.8 549.3 1303.0 528.8 1305.2 528.8C1307.4 528.8 1309.5 542.4 1311.7 547.6C1313.9 552.8 1316.1 560.0 1318.2 560.0C1320.4 560.0 1322.6 551.4 1324.8 550.0C1327.0 548.7 1329.1 548.0 1331.3 548.0C1333.5 548.0 1335.7 553.5 1337.8 553.5C1340.0 553.5 1342.2 547.6 1344.4 547.6C1346.5 547.6 1348.7 558.0 1350.9 559.3C1353.1 560.6 1355.2 561.2 1357.4 561.2C1359.6 561.2 1361.8 536.7 1363.9 536.7C1366.1 536.7 1368.3 561.7 1370.5 561.7C1372.6 561.7 1374.8 550.2 1377.0 550.2C1379.2 550.2 1381.4 558.4 1383.5 558.4C1385.7 558.4 1387.9 551.3 1390.1 551.3C1392.2 551.3 1394.4 561.8 1396.6 561.8C1398.8 561.8 1400.9 560.3 1403.1 559.1C1405.3 557.8 1407.5 556.3 1409.6 554.3C1411.8 552.2 1414.0 546.7 1416.2 546.7C1418.3 546.7 1420.5 558.4 1422.7 558.4C1424.9 558.4 1427.0 545.8 1429.2 545.8C1431.4 545.8 1433.6 549.9 1435.8 551.4C1437.9 552.9 1440.1 554.7 1442.3 554.7C1444.5 554.7 1446.6 554.1 1448.8 553.3C1451.0 552.4 1453.2 549.5 1455.3 549.5C1457.5 549.5 1459.7 555.1 1461.9 555.1C1464.0 555.1 1466.2 549.5 1468.4 549.5C1470.6 549.5 1472.7 555.1 1474.9 555.1C1477.1 555.1 1479.3 554.5 1481.4 553.3C1483.6 552.0 1485.8 543.0 1488.0 543.0C1490.1 543.0 1492.3 546.5 1494.5 549.5C1496.7 552.6 1498.9 561.2 1501.0 561.2C1503.2 561.2 1505.4 542.1 1507.6 542.1C1509.7 542.1 1511.9 561.7 1514.1 561.7C1516.3 561.7 1518.4 556.5 1520.6 551.9C1522.8 547.3 1525.0 539.4 1527.1 534.1C1529.3 528.9 1531.5 522.0 1533.7 520.1C1535.8 518.3 1538.0 517.3 1540.2 517.3C1542.4 517.3 1544.5 517.3 1546.7 517.3C1548.9 517.3 1551.1 539.7 1553.2 539.7C1555.4 539.7 1557.6 539.7 1559.8 539.7C1562.0 539.7 1564.1 534.1 1566.3 534.1C1568.5 534.1 1570.7 541.5 1572.8 544.4C1575.0 547.4 1577.2 551.9 1579.4 551.9C1581.5 551.9 1583.7 550.3 1585.9 547.2C1588.1 544.1 1590.2 501.0 1592.4 501.0C1594.6 501.0 1596.8 556.4 1598.9 557.0C1601.1 557.6 1603.3 557.9 1605.5 557.9C1607.6 557.9 1609.8 554.4 1612.0 550.9" fill="none" stroke="#4784f0" stroke-width="3.7" stroke-linejoin="round" stroke-linecap="round" clip-path="url(#cl)"/>
<path d="M1442.3 309.7V685.0" stroke="#d9dade" stroke-width="2" stroke-dasharray="1.8 1.8" fill="none"/>
<clipPath id="hv1"><circle cx="1442.3" cy="682.3" r="9.8"/><circle cx="1442.3" cy="682.3" r="9.8"/><circle cx="1442.3" cy="572.2" r="9.8"/><circle cx="1442.3" cy="559.8" r="9.8"/></clipPath>
<circle cx="1442.3" cy="682.3" r="9.8" fill="#e0be46"/>
<circle cx="1442.3" cy="682.3" r="9.8" fill="#e98938"/>
<circle cx="1442.3" cy="572.2" r="9.8" fill="#4fb0a1"/>
<circle cx="1442.3" cy="559.8" r="9.8" fill="#4784f0"/>
<path d="M1442.3 309.7V685.0" stroke="#eef1f8" stroke-width="2" stroke-dasharray="1.8 1.8" fill="none" clip-path="url(#hv1)"/>
<path d="M1832.0 309.8H2770.0" stroke="#d9d9dc" stroke-width="1.8" stroke-dasharray="1.8 1.8" fill="none"/>
<path d="M1832.0 496.1H2770.0" stroke="#d9d9dc" stroke-width="1.8" stroke-dasharray="1.8 1.8" fill="none"/>
<path d="M1832.0 683.4H2772.0" stroke="#e4e4e7" stroke-width="3.2"/>
<path d="M1832.0 452.5C1834.2 452.4 1836.4 452.2 1838.5 452.2C1840.7 452.2 1842.9 452.7 1845.1 452.7C1847.2 452.7 1849.4 452.5 1851.6 452.5C1853.8 452.5 1855.9 452.6 1858.1 452.6C1860.3 452.6 1862.5 452.1 1864.6 452.1C1866.8 452.1 1869.0 452.2 1871.2 452.2C1873.3 452.2 1875.5 452.0 1877.7 452.0C1879.9 452.0 1882.0 452.4 1884.2 452.4C1886.4 452.4 1888.6 452.1 1890.8 452.1C1892.9 452.0 1895.1 452.0 1897.3 452.0C1899.5 452.0 1901.6 452.0 1903.8 452.1C1906.0 452.1 1908.2 452.3 1910.3 452.3C1912.5 452.3 1914.7 452.3 1916.9 452.2C1919.0 452.2 1921.2 452.0 1923.4 451.9C1925.6 451.8 1927.7 451.8 1929.9 451.8C1932.1 451.8 1934.3 452.2 1936.4 452.2C1938.6 452.2 1940.8 451.9 1943.0 451.9C1945.1 451.9 1947.3 452.0 1949.5 452.0C1951.7 452.0 1953.9 451.7 1956.0 451.6C1958.2 451.6 1960.4 451.6 1962.6 451.6C1964.7 451.6 1966.9 451.9 1969.1 451.9C1971.3 451.9 1973.4 451.8 1975.6 451.7C1977.8 451.6 1980.0 451.5 1982.1 451.5C1984.3 451.5 1986.5 451.9 1988.7 451.9C1990.8 451.9 1993.0 451.7 1995.2 451.7C1997.4 451.7 1999.5 451.7 2001.7 451.7C2003.9 451.7 2006.1 451.4 2008.2 451.4C2010.4 451.4 2012.6 451.7 2014.8 451.7C2017.0 451.7 2019.1 451.3 2021.3 451.3C2023.5 451.3 2025.7 451.6 2027.8 451.6C2030.0 451.6 2032.2 451.5 2034.4 451.4C2036.5 451.3 2038.7 451.3 2040.9 451.3C2043.1 451.3 2045.2 451.3 2047.4 451.4C2049.6 451.4 2051.8 451.5 2053.9 451.5C2056.1 451.5 2058.3 451.2 2060.5 451.2C2062.6 451.1 2064.8 451.1 2067.0 451.1C2069.2 451.1 2071.4 451.2 2073.5 451.2C2075.7 451.2 2077.9 451.1 2080.1 451.0C2082.2 451.0 2084.4 451.0 2086.6 451.0C2088.8 450.9 2090.9 450.9 2093.1 450.9C2095.3 450.9 2097.5 450.9 2099.6 450.9C2101.8 450.9 2104.0 450.9 2106.2 450.9C2108.3 450.9 2110.5 450.9 2112.7 450.9C2114.9 450.9 2117.0 450.9 2119.2 450.9C2121.4 450.9 2123.6 451.1 2125.8 451.1C2127.9 451.1 2130.1 450.8 2132.3 450.8C2134.5 450.8 2136.6 450.9 2138.8 450.9C2141.0 450.9 2143.2 450.7 2145.3 450.7C2147.5 450.7 2149.7 450.7 2151.9 450.7C2154.0 450.7 2156.2 450.5 2158.4 450.5C2160.6 450.5 2162.7 450.6 2164.9 450.6C2167.1 450.6 2169.3 450.5 2171.4 450.5C2173.6 450.5 2175.8 450.8 2178.0 450.8C2180.1 450.8 2182.3 450.7 2184.5 450.7C2186.7 450.6 2188.9 450.4 2191.0 450.4C2193.2 450.4 2195.4 450.5 2197.6 450.5C2199.7 450.6 2201.9 450.7 2204.1 450.7C2206.3 450.7 2208.4 450.3 2210.6 450.3C2212.8 450.3 2215.0 450.6 2217.1 450.6C2219.3 450.6 2221.5 450.4 2223.7 450.4C2225.8 450.4 2228.0 450.4 2230.2 450.4C2232.4 450.4 2234.5 450.5 2236.7 450.5C2238.9 450.5 2241.1 450.3 2243.2 450.3C2245.4 450.3 2247.6 450.3 2249.8 450.3C2252.0 450.3 2254.1 450.3 2256.3 450.3C2258.5 450.4 2260.7 450.4 2262.8 450.4C2265.0 450.4 2267.2 450.1 2269.4 450.1C2271.5 450.1 2273.7 450.3 2275.9 450.3C2278.1 450.3 2280.2 450.2 2282.4 450.2C2284.6 450.2 2286.8 450.2 2288.9 450.1C2291.1 450.1 2293.3 450.0 2295.5 450.0C2297.6 450.0 2299.8 450.0 2302.0 449.9C2304.2 449.9 2306.4 449.7 2308.5 449.7C2310.7 449.7 2312.9 449.7 2315.1 449.7C2317.2 449.7 2319.4 449.7 2321.6 449.7C2323.8 449.7 2325.9 450.0 2328.1 450.0C2330.3 450.0 2332.5 449.8 2334.6 449.7C2336.8 449.7 2339.0 449.6 2341.2 449.6C2343.3 449.6 2345.5 449.5 2347.7 449.5C2349.9 449.5 2352.0 449.9 2354.2 449.9C2356.4 449.9 2358.6 449.9 2360.8 449.9C2362.9 449.9 2365.1 449.8 2367.3 449.7C2369.5 449.7 2371.6 449.5 2373.8 449.5C2376.0 449.5 2378.2 449.5 2380.3 449.5C2382.5 449.4 2384.7 449.4 2386.9 449.4C2389.0 449.4 2391.2 449.5 2393.4 449.5C2395.6 449.5 2397.7 449.3 2399.9 449.3C2402.1 449.3 2404.3 449.4 2406.4 449.4C2408.6 449.4 2410.8 449.3 2413.0 449.3C2415.1 449.3 2417.3 449.6 2419.5 449.6C2421.7 449.6 2423.9 449.6 2426.0 449.6C2428.2 449.6 2430.4 449.4 2432.6 449.3C2434.7 449.3 2436.9 449.1 2439.1 449.1C2441.3 449.1 2443.4 449.5 2445.6 449.5C2447.8 449.5 2450.0 449.1 2452.1 449.1C2454.3 449.1 2456.5 449.1 2458.7 449.1C2460.8 449.1 2463.0 448.9 2465.2 448.9C2467.4 448.9 2469.5 449.0 2471.7 449.0C2473.9 449.0 2476.1 449.0 2478.2 449.0C2480.4 449.0 2482.6 449.0 2484.8 449.0C2487.0 449.0 2489.1 448.8 2491.3 448.8C2493.5 448.8 2495.7 449.0 2497.8 449.0C2500.0 449.0 2502.2 448.7 2504.4 448.7C2506.5 448.7 2508.7 448.8 2510.9 448.8C2513.1 448.8 2515.2 448.6 2517.4 448.6C2519.6 448.6 2521.8 448.8 2523.9 448.8C2526.1 448.8 2528.3 448.6 2530.5 448.6C2532.6 448.5 2534.8 448.5 2537.0 448.5C2539.2 448.5 2541.4 448.6 2543.5 448.6C2545.7 448.6 2547.9 448.5 2550.1 448.5C2552.2 448.5 2554.4 448.7 2556.6 448.7C2558.8 448.7 2560.9 448.6 2563.1 448.6C2565.3 448.6 2567.5 448.7 2569.6 448.7C2571.8 448.7 2574.0 448.6 2576.2 448.6C2578.3 448.6 2580.5 448.6 2582.7 448.6C2584.9 448.6 2587.0 448.7 2589.2 448.7C2591.4 448.7 2593.6 448.4 2595.8 448.4C2597.9 448.3 2600.1 448.3 2602.3 448.3C2604.5 448.3 2606.6 448.6 2608.8 448.6C2611.0 448.6 2613.2 448.2 2615.3 448.2C2617.5 448.2 2619.7 448.4 2621.9 448.4C2624.0 448.4 2626.2 448.4 2628.4 448.3C2630.6 448.3 2632.7 448.0 2634.9 448.0C2637.1 448.0 2639.3 448.4 2641.4 448.4C2643.6 448.4 2645.8 448.4 2648.0 448.4C2650.1 448.4 2652.3 448.2 2654.5 448.2C2656.7 448.2 2658.9 448.2 2661.0 448.2C2663.2 448.2 2665.4 448.2 2667.6 448.2C2669.7 448.2 2671.9 447.8 2674.1 447.8C2676.3 447.8 2678.4 448.0 2680.6 448.0C2682.8 448.0 2685.0 448.0 2687.1 448.0C2689.3 448.0 2691.5 448.1 2693.7 448.1C2695.8 448.1 2698.0 448.0 2700.2 448.0C2702.4 448.0 2704.5 448.0 2706.7 448.0C2708.9 448.0 2711.1 447.9 2713.2 447.9C2715.4 447.9 2717.6 448.0 2719.8 448.0C2722.0 448.0 2724.1 447.9 2726.3 447.8C2728.5 447.8 2730.7 447.8 2732.8 447.8C2735.0 447.8 2737.2 447.3 2739.4 447.1C2741.5 446.9 2743.7 446.7 2745.9 446.5C2748.1 446.4 2750.2 446.1 2752.4 446.1C2754.6 446.1 2756.8 446.2 2758.9 446.2C2761.1 446.2 2763.3 446.0 2765.5 446.0C2767.6 446.0 2769.8 446.2 2772.0 446.4" fill="none" stroke="#4784f0" stroke-width="3.7" stroke-linejoin="round" stroke-linecap="round" clip-path="url(#cr)"/>
<path d="M1832.0 451.7C1834.2 451.6 1836.4 451.4 1838.5 451.4C1840.7 451.4 1842.9 451.9 1845.1 451.9C1847.2 451.9 1849.4 451.7 1851.6 451.7C1853.8 451.7 1855.9 451.8 1858.1 451.8C1860.3 451.8 1862.5 451.3 1864.6 451.3C1866.8 451.3 1869.0 451.4 1871.2 451.4C1873.3 451.4 1875.5 451.2 1877.7 451.2C1879.9 451.2 1882.0 451.6 1884.2 451.6C1886.4 451.6 1888.6 451.3 1890.8 451.3C1892.9 451.2 1895.1 451.2 1897.3 451.2C1899.5 451.2 1901.6 451.2 1903.8 451.3C1906.0 451.3 1908.2 451.5 1910.3 451.5C1912.5 451.5 1914.7 451.5 1916.9 451.4C1919.0 451.4 1921.2 451.2 1923.4 451.1C1925.6 451.0 1927.7 451.0 1929.9 451.0C1932.1 451.0 1934.3 451.4 1936.4 451.4C1938.6 451.4 1940.8 451.1 1943.0 451.1C1945.1 451.1 1947.3 451.2 1949.5 451.2C1951.7 451.2 1953.9 450.9 1956.0 450.8C1958.2 450.8 1960.4 450.8 1962.6 450.8C1964.7 450.8 1966.9 451.1 1969.1 451.1C1971.3 451.1 1973.4 451.0 1975.6 450.9C1977.8 450.8 1980.0 450.7 1982.1 450.7C1984.3 450.7 1986.5 451.1 1988.7 451.1C1990.8 451.1 1993.0 450.9 1995.2 450.9C1997.4 450.9 1999.5 450.9 2001.7 450.9C2003.9 450.9 2006.1 450.6 2008.2 450.6C2010.4 450.6 2012.6 450.9 2014.8 450.9C2017.0 450.9 2019.1 450.5 2021.3 450.5C2023.5 450.5 2025.7 450.8 2027.8 450.8C2030.0 450.8 2032.2 450.7 2034.4 450.6C2036.5 450.5 2038.7 450.5 2040.9 450.5C2043.1 450.5 2045.2 450.5 2047.4 450.6C2049.6 450.6 2051.8 450.7 2053.9 450.7C2056.1 450.7 2058.3 450.4 2060.5 450.4C2062.6 450.3 2064.8 450.3 2067.0 450.3C2069.2 450.3 2071.4 450.4 2073.5 450.4C2075.7 450.4 2077.9 450.3 2080.1 450.2C2082.2 450.2 2084.4 450.2 2086.6 450.2C2088.8 450.1 2090.9 450.1 2093.1 450.1C2095.3 450.1 2097.5 450.1 2099.6 450.1C2101.8 450.1 2104.0 450.1 2106.2 450.1C2108.3 450.1 2110.5 450.1 2112.7 450.1C2114.9 450.1 2117.0 450.1 2119.2 450.1C2121.4 450.1 2123.6 450.3 2125.8 450.3C2127.9 450.3 2130.1 450.0 2132.3 450.0C2134.5 450.0 2136.6 450.1 2138.8 450.1C2141.0 450.1 2143.2 449.9 2145.3 449.9C2147.5 449.9 2149.7 449.9 2151.9 449.9C2154.0 449.9 2156.2 449.7 2158.4 449.7C2160.6 449.7 2162.7 449.8 2164.9 449.8C2167.1 449.8 2169.3 449.7 2171.4 449.7C2173.6 449.7 2175.8 450.0 2178.0 450.0C2180.1 450.0 2182.3 449.9 2184.5 449.9C2186.7 449.8 2188.9 449.6 2191.0 449.6C2193.2 449.6 2195.4 449.7 2197.6 449.7C2199.7 449.8 2201.9 449.9 2204.1 449.9C2206.3 449.9 2208.4 449.5 2210.6 449.5C2212.8 449.5 2215.0 449.8 2217.1 449.8C2219.3 449.8 2221.5 449.6 2223.7 449.6C2225.8 449.6 2228.0 449.6 2230.2 449.6C2232.4 449.6 2234.5 449.7 2236.7 449.7C2238.9 449.7 2241.1 449.5 2243.2 449.5C2245.4 449.5 2247.6 449.5 2249.8 449.5C2252.0 449.5 2254.1 449.5 2256.3 449.5C2258.5 449.6 2260.7 449.6 2262.8 449.6C2265.0 449.6 2267.2 449.3 2269.4 449.3C2271.5 449.3 2273.7 449.5 2275.9 449.5C2278.1 449.5 2280.2 449.4 2282.4 449.4C2284.6 449.4 2286.8 449.4 2288.9 449.3C2291.1 449.3 2293.3 449.2 2295.5 449.2C2297.6 449.2 2299.8 449.2 2302.0 449.1C2304.2 449.1 2306.4 448.9 2308.5 448.9C2310.7 448.9 2312.9 448.9 2315.1 448.9C2317.2 448.9 2319.4 448.9 2321.6 448.9C2323.8 448.9 2325.9 449.2 2328.1 449.2C2330.3 449.2 2332.5 449.0 2334.6 448.9C2336.8 448.9 2339.0 448.8 2341.2 448.8C2343.3 448.8 2345.5 448.7 2347.7 448.7C2349.9 448.7 2352.0 449.1 2354.2 449.1C2356.4 449.1 2358.6 449.1 2360.8 449.1C2362.9 449.1 2365.1 449.0 2367.3 448.9C2369.5 448.9 2371.6 448.7 2373.8 448.7C2376.0 448.7 2378.2 448.7 2380.3 448.7C2382.5 448.6 2384.7 448.6 2386.9 448.6C2389.0 448.6 2391.2 448.7 2393.4 448.7C2395.6 448.7 2397.7 448.5 2399.9 448.5C2402.1 448.5 2404.3 448.6 2406.4 448.6C2408.6 448.6 2410.8 448.5 2413.0 448.5C2415.1 448.5 2417.3 448.8 2419.5 448.8C2421.7 448.8 2423.9 448.8 2426.0 448.8C2428.2 448.8 2430.4 448.6 2432.6 448.5C2434.7 448.5 2436.9 448.3 2439.1 448.3C2441.3 448.3 2443.4 448.7 2445.6 448.7C2447.8 448.7 2450.0 448.3 2452.1 448.3C2454.3 448.3 2456.5 448.3 2458.7 448.3C2460.8 448.3 2463.0 448.1 2465.2 448.1C2467.4 448.1 2469.5 448.2 2471.7 448.2C2473.9 448.2 2476.1 448.2 2478.2 448.2C2480.4 448.2 2482.6 448.2 2484.8 448.2C2487.0 448.2 2489.1 448.0 2491.3 448.0C2493.5 448.0 2495.7 448.2 2497.8 448.2C2500.0 448.2 2502.2 447.9 2504.4 447.9C2506.5 447.9 2508.7 448.0 2510.9 448.0C2513.1 448.0 2515.2 447.8 2517.4 447.8C2519.6 447.8 2521.8 448.0 2523.9 448.0C2526.1 448.0 2528.3 447.8 2530.5 447.8C2532.6 447.7 2534.8 447.7 2537.0 447.7C2539.2 447.7 2541.4 447.8 2543.5 447.8C2545.7 447.8 2547.9 447.7 2550.1 447.7C2552.2 447.7 2554.4 447.9 2556.6 447.9C2558.8 447.9 2560.9 447.8 2563.1 447.8C2565.3 447.8 2567.5 447.9 2569.6 447.9C2571.8 447.9 2574.0 447.8 2576.2 447.8C2578.3 447.8 2580.5 447.8 2582.7 447.8C2584.9 447.8 2587.0 447.9 2589.2 447.9C2591.4 447.9 2593.6 447.6 2595.8 447.6C2597.9 447.5 2600.1 447.5 2602.3 447.5C2604.5 447.5 2606.6 447.8 2608.8 447.8C2611.0 447.8 2613.2 447.4 2615.3 447.4C2617.5 447.4 2619.7 447.6 2621.9 447.6C2624.0 447.6 2626.2 447.6 2628.4 447.5C2630.6 447.5 2632.7 447.2 2634.9 447.2C2637.1 447.2 2639.3 447.6 2641.4 447.6C2643.6 447.6 2645.8 447.6 2648.0 447.6C2650.1 447.6 2652.3 447.4 2654.5 447.4C2656.7 447.4 2658.9 447.4 2661.0 447.4C2663.2 447.4 2665.4 447.4 2667.6 447.4C2669.7 447.4 2671.9 447.0 2674.1 447.0C2676.3 447.0 2678.4 447.2 2680.6 447.2C2682.8 447.2 2685.0 447.2 2687.1 447.2C2689.3 447.2 2691.5 447.3 2693.7 447.3C2695.8 447.3 2698.0 447.2 2700.2 447.2C2702.4 447.2 2704.5 447.2 2706.7 447.2C2708.9 447.2 2711.1 447.1 2713.2 447.1C2715.4 447.1 2717.6 447.2 2719.8 447.2C2722.0 447.2 2724.1 447.1 2726.3 447.0C2728.5 447.0 2730.7 447.0 2732.8 447.0C2735.0 447.0 2737.2 446.5 2739.4 446.3C2741.5 446.1 2743.7 445.9 2745.9 445.7C2748.1 445.6 2750.2 445.3 2752.4 445.3C2754.6 445.3 2756.8 445.4 2758.9 445.4C2761.1 445.4 2763.3 445.2 2765.5 445.2C2767.6 445.2 2769.8 445.4 2772.0 445.6" fill="none" stroke="#4fb0a1" stroke-width="3.7" stroke-linejoin="round" stroke-linecap="round" clip-path="url(#cr)"/>
<path d="M2602.3 309.8V685.0" stroke="#d9dade" stroke-width="2" stroke-dasharray="1.8 1.8" fill="none"/>
<clipPath id="hv2"><circle cx="2602.3" cy="447.5" r="9.8"/><circle cx="2602.3" cy="447.3" r="9.8"/></clipPath>
<circle cx="2602.3" cy="447.5" r="9.8" fill="#4784f0"/>
<circle cx="2602.3" cy="447.3" r="9.8" fill="#4fb0a1"/>
<path d="M2602.3 309.8V685.0" stroke="#eef1f8" stroke-width="2" stroke-dasharray="1.8 1.8" fill="none" clip-path="url(#hv2)"/>
<path d="M672.0 955.9H1610.0" stroke="#d9d9dc" stroke-width="1.8" stroke-dasharray="1.8 1.8" fill="none"/>
<path d="M672.0 1143.3H1610.0" stroke="#d9d9dc" stroke-width="1.8" stroke-dasharray="1.8 1.8" fill="none"/>
<path d="M672.0 965.0L1612.0 965.0L1612.0 1331.0 L672.0 1331.0Z" fill="#c92e72" fill-opacity=".3" stroke="#c92e72" stroke-width="3.8" stroke-linejoin="miter" clip-path="url(#cl)"/>
<path d="M672.0 1250.5L1612.0 1250.5L1612.0 1331.0 L672.0 1331.0Z" fill="#4784f0" fill-opacity=".3" stroke="#4784f0" stroke-width="3.8" stroke-linejoin="miter" clip-path="url(#cl)"/>
<path d="M672.0 1316.0C674.2 1306.0 676.4 1296.0 678.5 1296.0C680.7 1296.0 682.9 1302.0 685.1 1302.0C687.2 1302.0 689.4 1301.9 691.6 1301.8C693.8 1301.7 695.9 1301.3 698.1 1300.7C700.3 1300.1 702.5 1298.2 704.6 1298.2C706.8 1298.2 709.0 1304.2 711.2 1304.2C713.3 1304.2 715.5 1299.1 717.7 1299.1C719.9 1299.1 722.0 1299.1 724.2 1299.1C726.4 1299.1 728.6 1300.3 730.8 1300.3C732.9 1300.3 735.1 1298.3 737.3 1298.3C739.5 1298.3 741.6 1305.4 743.8 1305.4C746.0 1305.4 748.2 1296.2 750.3 1296.2C752.5 1296.2 754.7 1298.7 756.9 1299.6C759.0 1300.5 761.2 1301.5 763.4 1301.5C765.6 1301.5 767.7 1298.6 769.9 1298.6C772.1 1298.6 774.3 1300.4 776.4 1300.4C778.6 1300.4 780.8 1298.4 783.0 1298.4C785.1 1298.4 787.3 1300.4 789.5 1300.4C791.7 1300.4 793.9 1299.4 796.0 1299.4C798.2 1299.4 800.4 1301.9 802.6 1301.9C804.7 1301.9 806.9 1301.3 809.1 1300.8C811.3 1300.2 813.4 1298.3 815.6 1298.3C817.8 1298.3 820.0 1305.4 822.1 1305.4C824.3 1305.4 826.5 1304.0 828.7 1302.9C830.8 1301.9 833.0 1299.3 835.2 1299.3C837.4 1299.3 839.5 1302.8 841.7 1302.8C843.9 1302.8 846.1 1301.1 848.2 1300.9C850.4 1300.7 852.6 1300.8 854.8 1300.6C857.0 1300.4 859.1 1298.6 861.3 1298.6C863.5 1298.6 865.7 1300.1 867.8 1300.5C870.0 1301.0 872.2 1301.2 874.4 1301.6C876.5 1301.9 878.7 1302.3 880.9 1302.6C883.1 1302.8 885.2 1303.0 887.4 1303.0C889.6 1303.0 891.8 1301.4 893.9 1301.4C896.1 1301.4 898.3 1301.7 900.5 1301.7C902.6 1301.7 904.8 1300.0 907.0 1299.9C909.2 1299.7 911.4 1299.6 913.5 1299.6C915.7 1299.6 917.9 1299.6 920.1 1299.7C922.2 1299.7 924.4 1302.8 926.6 1302.8C928.8 1302.8 930.9 1298.0 933.1 1298.0C935.3 1298.0 937.5 1304.2 939.6 1304.2C941.8 1304.2 944.0 1303.8 946.2 1303.1C948.3 1302.4 950.5 1301.2 952.7 1299.8C954.9 1298.3 957.0 1294.3 959.2 1294.3C961.4 1294.3 963.6 1297.0 965.8 1298.2C967.9 1299.3 970.1 1300.4 972.3 1301.2C974.5 1302.0 976.6 1302.9 978.8 1302.9C981.0 1302.9 983.2 1299.5 985.3 1299.5C987.5 1299.5 989.7 1302.0 991.9 1302.0C994.0 1302.0 996.2 1298.1 998.4 1298.1C1000.6 1298.1 1002.7 1299.5 1004.9 1300.0C1007.1 1300.4 1009.3 1300.8 1011.4 1300.8C1013.6 1300.8 1015.8 1298.3 1018.0 1298.3C1020.1 1298.3 1022.3 1300.0 1024.5 1300.0C1026.7 1300.0 1028.9 1298.6 1031.0 1298.6C1033.2 1298.6 1035.4 1300.2 1037.6 1300.4C1039.7 1300.6 1041.9 1300.8 1044.1 1300.8C1046.3 1300.8 1048.4 1300.3 1050.6 1300.1C1052.8 1299.8 1055.0 1299.2 1057.1 1299.2C1059.3 1299.2 1061.5 1301.3 1063.7 1301.3C1065.8 1301.3 1068.0 1299.1 1070.2 1299.1C1072.4 1299.1 1074.5 1307.4 1076.7 1307.4C1078.9 1307.4 1081.1 1298.7 1083.2 1298.7C1085.4 1298.7 1087.6 1302.6 1089.8 1302.6C1092.0 1302.6 1094.1 1299.0 1096.3 1299.0C1098.5 1299.0 1100.7 1303.1 1102.8 1303.1C1105.0 1303.1 1107.2 1298.8 1109.4 1298.6C1111.5 1298.5 1113.7 1298.4 1115.9 1298.4C1118.1 1298.4 1120.2 1298.4 1122.4 1298.4C1124.6 1298.4 1126.8 1298.7 1128.9 1299.2C1131.1 1299.8 1133.3 1302.5 1135.5 1302.5C1137.6 1302.5 1139.8 1300.0 1142.0 1300.0C1144.2 1300.0 1146.4 1300.2 1148.5 1300.6C1150.7 1301.0 1152.9 1304.7 1155.1 1304.7C1157.2 1304.7 1159.4 1300.9 1161.6 1300.9C1163.8 1300.9 1165.9 1301.3 1168.1 1301.5C1170.3 1301.7 1172.5 1302.0 1174.6 1302.0C1176.8 1302.0 1179.0 1298.4 1181.2 1298.4C1183.3 1298.4 1185.5 1299.7 1187.7 1299.9C1189.9 1300.1 1192.0 1300.0 1194.2 1300.1C1196.4 1300.3 1198.6 1302.1 1200.8 1302.1C1202.9 1302.1 1205.1 1298.6 1207.3 1298.6C1209.5 1298.6 1211.6 1301.2 1213.8 1301.9C1216.0 1302.6 1218.2 1302.9 1220.3 1302.9C1222.5 1302.9 1224.7 1298.3 1226.9 1298.3C1229.0 1298.3 1231.2 1302.7 1233.4 1302.7C1235.6 1302.7 1237.7 1300.3 1239.9 1300.3C1242.1 1300.3 1244.3 1302.0 1246.4 1302.0C1248.6 1302.0 1250.8 1298.8 1253.0 1298.7C1255.1 1298.5 1257.3 1298.5 1259.5 1298.5C1261.7 1298.5 1263.9 1301.5 1266.0 1301.5C1268.2 1301.5 1270.4 1297.6 1272.6 1297.6C1274.7 1297.6 1276.9 1297.7 1279.1 1297.9C1281.3 1298.1 1283.4 1306.9 1285.6 1306.9C1287.8 1306.9 1290.0 1299.7 1292.1 1299.5C1294.3 1299.3 1296.5 1299.4 1298.7 1299.2C1300.8 1299.0 1303.0 1296.5 1305.2 1296.5C1307.4 1296.5 1309.5 1299.5 1311.7 1299.5C1313.9 1299.5 1316.1 1298.9 1318.2 1298.9C1320.4 1298.9 1322.6 1308.0 1324.8 1308.0C1327.0 1308.0 1329.1 1299.5 1331.3 1299.5C1333.5 1299.5 1335.7 1302.9 1337.8 1302.9C1340.0 1302.9 1342.2 1302.8 1344.4 1302.5C1346.5 1302.2 1348.7 1299.1 1350.9 1299.1C1353.1 1299.1 1355.2 1302.0 1357.4 1302.9C1359.6 1303.8 1361.8 1304.5 1363.9 1304.5C1366.1 1304.5 1368.3 1303.5 1370.5 1302.5C1372.6 1301.5 1374.8 1298.3 1377.0 1298.3C1379.2 1298.3 1381.4 1299.9 1383.5 1300.1C1385.7 1300.3 1387.9 1300.2 1390.1 1300.5C1392.2 1300.7 1394.4 1300.9 1396.6 1301.6C1398.8 1302.4 1400.9 1305.0 1403.1 1305.0C1405.3 1305.0 1407.5 1302.7 1409.6 1301.7C1411.8 1300.7 1414.0 1299.0 1416.2 1299.0C1418.3 1299.0 1420.5 1299.5 1422.7 1299.5C1424.9 1299.5 1427.0 1299.1 1429.2 1299.1C1431.4 1299.1 1433.6 1301.4 1435.8 1301.9C1437.9 1302.3 1440.1 1302.5 1442.3 1302.5C1444.5 1302.5 1446.6 1298.9 1448.8 1298.9C1451.0 1298.9 1453.2 1299.4 1455.3 1300.1C1457.5 1300.7 1459.7 1302.8 1461.9 1302.8C1464.0 1302.8 1466.2 1299.9 1468.4 1299.9C1470.6 1299.9 1472.7 1302.8 1474.9 1303.0C1477.1 1303.1 1479.3 1303.2 1481.4 1303.2C1483.6 1303.2 1485.8 1301.7 1488.0 1300.2C1490.1 1298.8 1492.3 1294.5 1494.5 1294.5C1496.7 1294.5 1498.9 1302.7 1501.0 1302.7C1503.2 1302.7 1505.4 1298.9 1507.6 1298.9C1509.7 1298.9 1511.9 1307.8 1514.1 1307.8C1516.3 1307.8 1518.4 1301.7 1520.6 1301.7C1522.8 1301.7 1525.0 1303.0 1527.1 1303.0C1529.3 1303.0 1531.5 1293.5 1533.7 1293.5C1535.8 1293.5 1538.0 1299.7 1540.2 1299.7C1542.4 1299.7 1544.5 1298.5 1546.7 1298.5C1548.9 1298.5 1551.1 1298.7 1553.2 1299.0C1555.4 1299.3 1557.6 1301.1 1559.8 1302.2C1562.0 1303.2 1564.1 1305.1 1566.3 1305.1C1568.5 1305.1 1570.7 1298.9 1572.8 1298.9C1575.0 1298.9 1577.2 1299.8 1579.4 1300.2C1581.5 1300.7 1583.7 1301.7 1585.9 1301.7C1588.1 1301.7 1590.2 1301.2 1592.4 1301.2C1594.6 1301.2 1596.8 1301.2 1598.9 1301.2C1601.1 1301.1 1603.3 1300.4 1605.5 1299.0C1607.6 1297.6 1609.8 1295.3 1612.0 1293.0L1612.0 1331.0 L672.0 1331.0Z" fill="#4fb0a1" fill-opacity=".3" stroke="#4fb0a1" stroke-width="3.8" stroke-linejoin="miter" clip-path="url(#cl)"/>
<path d="M675.0 1143.3H1608.0" stroke="#cfc0cf" stroke-opacity=".55" stroke-width="1.8" stroke-dasharray="1.8 1.8" fill="none"/>
<path d="M1442.3 955.9V1331.0" stroke="#d9dade" stroke-width="2" stroke-dasharray="1.8 1.8" fill="none"/>
<clipPath id="hv3"><circle cx="1442.3" cy="964.9" r="9.8"/><circle cx="1442.3" cy="1250.6" r="9.8"/><circle cx="1442.3" cy="1303.0" r="9.8"/></clipPath>
<circle cx="1442.3" cy="964.9" r="9.8" fill="#c92e72"/>
<circle cx="1442.3" cy="1250.6" r="9.8" fill="#4784f0"/>
<circle cx="1442.3" cy="1303.0" r="9.8" fill="#4fb0a1"/>
<path d="M1442.3 955.9V1331.0" stroke="#eef1f8" stroke-width="2" stroke-dasharray="1.8 1.8" fill="none" clip-path="url(#hv3)"/>
<path d="M1832.0 955.9H2770.0" stroke="#d9d9dc" stroke-width="1.8" stroke-dasharray="1.8 1.8" fill="none"/>
<path d="M1832.0 1143.4H2770.0" stroke="#d9d9dc" stroke-width="1.8" stroke-dasharray="1.8 1.8" fill="none"/>
<path d="M1832.0 978.6L2772.0 978.6L2772.0 1331.0 L1832.0 1331.0Z" fill="#4784f0" fill-opacity=".3" stroke="#4784f0" stroke-width="3.8" stroke-linejoin="miter" clip-path="url(#cr)"/>
<path d="M1832.0 1061.3C1834.2 1061.3 1836.4 1061.3 1838.5 1061.3C1840.7 1061.3 1842.9 1061.1 1845.1 1061.1C1847.2 1061.0 1849.4 1061.0 1851.6 1061.0C1853.8 1061.0 1855.9 1061.2 1858.1 1061.2C1860.3 1061.2 1862.5 1061.1 1864.6 1061.1C1866.8 1061.0 1869.0 1060.9 1871.2 1060.9C1873.3 1060.9 1875.5 1061.1 1877.7 1061.1C1879.9 1061.1 1882.0 1060.9 1884.2 1060.9C1886.4 1060.8 1888.6 1060.8 1890.8 1060.8C1892.9 1060.8 1895.1 1060.7 1897.3 1060.7C1899.5 1060.7 1901.6 1060.9 1903.8 1060.9C1906.0 1061.0 1908.2 1061.0 1910.3 1061.0C1912.5 1061.0 1914.7 1060.8 1916.9 1060.8C1919.0 1060.8 1921.2 1060.9 1923.4 1060.9C1925.6 1060.9 1927.7 1060.5 1929.9 1060.5C1932.1 1060.5 1934.3 1060.5 1936.4 1060.6C1938.6 1060.6 1940.8 1060.6 1943.0 1060.6C1945.1 1060.7 1947.3 1060.8 1949.5 1060.8C1951.7 1060.8 1953.9 1060.8 1956.0 1060.7C1958.2 1060.7 1960.4 1060.5 1962.6 1060.5C1964.7 1060.4 1966.9 1060.4 1969.1 1060.4C1971.3 1060.4 1973.4 1060.4 1975.6 1060.4C1977.8 1060.4 1980.0 1060.4 1982.1 1060.4C1984.3 1060.4 1986.5 1060.6 1988.7 1060.6C1990.8 1060.6 1993.0 1060.2 1995.2 1060.2C1997.4 1060.2 1999.5 1060.4 2001.7 1060.4C2003.9 1060.4 2006.1 1060.4 2008.2 1060.4C2010.4 1060.4 2012.6 1060.4 2014.8 1060.4C2017.0 1060.4 2019.1 1060.4 2021.3 1060.3C2023.5 1060.3 2025.7 1060.3 2027.8 1060.2C2030.0 1060.2 2032.2 1060.1 2034.4 1060.1C2036.5 1060.1 2038.7 1060.1 2040.9 1060.1C2043.1 1060.0 2045.2 1060.0 2047.4 1060.0C2049.6 1060.0 2051.8 1060.2 2053.9 1060.2C2056.1 1060.2 2058.3 1059.9 2060.5 1059.9C2062.6 1059.9 2064.8 1059.9 2067.0 1059.9C2069.2 1059.9 2071.4 1060.1 2073.5 1060.1C2075.7 1060.1 2077.9 1059.9 2080.1 1059.8C2082.2 1059.8 2084.4 1059.7 2086.6 1059.7C2088.8 1059.7 2090.9 1059.7 2093.1 1059.7C2095.3 1059.7 2097.5 1059.8 2099.6 1059.8C2101.8 1059.8 2104.0 1059.7 2106.2 1059.7C2108.3 1059.7 2110.5 1059.9 2112.7 1059.9C2114.9 1059.9 2117.0 1059.9 2119.2 1059.9C2121.4 1059.9 2123.6 1059.9 2125.8 1059.9C2127.9 1059.9 2130.1 1059.6 2132.3 1059.6C2134.5 1059.5 2136.6 1059.5 2138.8 1059.5C2141.0 1059.4 2143.2 1059.4 2145.3 1059.4C2147.5 1059.4 2149.7 1059.5 2151.9 1059.6C2154.0 1059.6 2156.2 1059.6 2158.4 1059.6C2160.6 1059.6 2162.7 1059.5 2164.9 1059.5C2167.1 1059.4 2169.3 1059.3 2171.4 1059.3C2173.6 1059.3 2175.8 1059.4 2178.0 1059.4C2180.1 1059.4 2182.3 1059.4 2184.5 1059.4C2186.7 1059.4 2188.9 1059.4 2191.0 1059.4C2193.2 1059.4 2195.4 1059.4 2197.6 1059.4C2199.7 1059.4 2201.9 1059.4 2204.1 1059.4C2206.3 1059.4 2208.4 1059.4 2210.6 1059.3C2212.8 1059.3 2215.0 1059.1 2217.1 1059.1C2219.3 1059.1 2221.5 1059.3 2223.7 1059.3C2225.8 1059.3 2228.0 1059.1 2230.2 1059.1C2232.4 1059.1 2234.5 1059.1 2236.7 1059.1C2238.9 1059.1 2241.1 1059.0 2243.2 1059.0C2245.4 1059.0 2247.6 1059.1 2249.8 1059.1C2252.0 1059.1 2254.1 1058.9 2256.3 1058.9C2258.5 1058.9 2260.7 1058.9 2262.8 1058.9C2265.0 1058.9 2267.2 1058.9 2269.4 1058.9C2271.5 1058.9 2273.7 1058.9 2275.9 1058.9C2278.1 1058.9 2280.2 1059.2 2282.4 1059.2C2284.6 1059.2 2286.8 1059.1 2288.9 1059.0C2291.1 1059.0 2293.3 1058.9 2295.5 1058.9C2297.6 1058.9 2299.8 1058.9 2302.0 1059.0C2304.2 1059.0 2306.4 1059.2 2308.5 1059.2C2310.7 1059.2 2312.9 1059.1 2315.1 1059.0C2317.2 1059.0 2319.4 1058.9 2321.6 1058.9C2323.8 1058.9 2325.9 1059.1 2328.1 1059.1C2330.3 1059.1 2332.5 1059.1 2334.6 1059.1C2336.8 1059.1 2339.0 1059.2 2341.2 1059.2C2343.3 1059.2 2345.5 1058.8 2347.7 1058.8C2349.9 1058.8 2352.0 1058.9 2354.2 1059.0C2356.4 1059.0 2358.6 1059.1 2360.8 1059.1C2362.9 1059.1 2365.1 1059.1 2367.3 1059.1C2369.5 1059.1 2371.6 1059.2 2373.8 1059.2C2376.0 1059.2 2378.2 1058.8 2380.3 1058.8C2382.5 1058.8 2384.7 1058.9 2386.9 1058.9C2389.0 1058.9 2391.2 1058.8 2393.4 1058.8C2395.6 1058.8 2397.7 1058.9 2399.9 1058.9C2402.1 1058.9 2404.3 1059.2 2406.4 1059.2C2408.6 1059.2 2410.8 1059.0 2413.0 1059.0C2415.1 1059.0 2417.3 1059.2 2419.5 1059.2C2421.7 1059.2 2423.9 1058.9 2426.0 1058.9C2428.2 1058.9 2430.4 1059.1 2432.6 1059.1C2434.7 1059.1 2436.9 1059.0 2439.1 1059.0C2441.3 1058.9 2443.4 1058.9 2445.6 1058.9C2447.8 1058.9 2450.0 1059.1 2452.1 1059.1C2454.3 1059.2 2456.5 1059.2 2458.7 1059.2C2460.8 1059.2 2463.0 1058.8 2465.2 1058.8C2467.4 1058.8 2469.5 1059.0 2471.7 1059.0C2473.9 1059.0 2476.1 1059.0 2478.2 1059.0C2480.4 1059.0 2482.6 1058.9 2484.8 1058.9C2487.0 1058.9 2489.1 1058.9 2491.3 1058.9C2493.5 1058.9 2495.7 1058.9 2497.8 1058.9C2500.0 1058.9 2502.2 1058.9 2504.4 1058.9C2506.5 1058.9 2508.7 1058.9 2510.9 1058.9C2513.1 1058.9 2515.2 1059.0 2517.4 1059.0C2519.6 1059.1 2521.8 1059.1 2523.9 1059.1C2526.1 1059.1 2528.3 1058.9 2530.5 1058.9C2532.6 1058.8 2534.8 1058.8 2537.0 1058.8C2539.2 1058.8 2541.4 1058.9 2543.5 1058.9C2545.7 1059.0 2547.9 1059.1 2550.1 1059.1C2552.2 1059.1 2554.4 1058.9 2556.6 1058.9C2558.8 1058.9 2560.9 1058.9 2563.1 1058.9C2565.3 1058.9 2567.5 1058.9 2569.6 1058.9C2571.8 1058.9 2574.0 1059.1 2576.2 1059.1C2578.3 1059.1 2580.5 1059.1 2582.7 1059.0C2584.9 1059.0 2587.0 1058.8 2589.2 1058.8C2591.4 1058.8 2593.6 1058.8 2595.8 1058.8C2597.9 1058.9 2600.1 1058.9 2602.3 1059.0C2604.5 1059.0 2606.6 1059.0 2608.8 1059.0C2611.0 1059.0 2613.2 1059.1 2615.3 1059.1C2617.5 1059.1 2619.7 1058.8 2621.9 1058.8C2624.0 1058.8 2626.2 1058.8 2628.4 1058.9C2630.6 1058.9 2632.7 1059.1 2634.9 1059.1C2637.1 1059.1 2639.3 1059.0 2641.4 1059.0C2643.6 1058.9 2645.8 1058.9 2648.0 1058.9C2650.1 1058.9 2652.3 1058.9 2654.5 1058.9C2656.7 1058.9 2658.9 1059.2 2661.0 1059.2C2663.2 1059.2 2665.4 1058.9 2667.6 1058.9C2669.7 1058.9 2671.9 1059.0 2674.1 1059.0C2676.3 1059.0 2678.4 1058.9 2680.6 1058.9C2682.8 1058.9 2685.0 1059.0 2687.1 1059.0C2689.3 1059.0 2691.5 1059.1 2693.7 1059.1C2695.8 1059.2 2698.0 1059.2 2700.2 1059.2C2702.4 1059.2 2704.5 1059.0 2706.7 1058.9C2708.9 1058.9 2711.1 1058.9 2713.2 1058.9C2715.4 1058.9 2717.6 1059.1 2719.8 1059.1C2722.0 1059.1 2724.1 1058.9 2726.3 1058.9C2728.5 1058.8 2730.7 1058.8 2732.8 1058.8C2735.0 1058.8 2737.2 1059.2 2739.4 1059.2C2741.5 1059.2 2743.7 1059.0 2745.9 1059.0C2748.1 1059.0 2750.2 1059.1 2752.4 1059.1C2754.6 1059.1 2756.8 1059.0 2758.9 1059.0C2761.1 1059.0 2763.3 1059.2 2765.5 1059.2C2767.6 1059.2 2769.8 1059.1 2772.0 1059.0L2772.0 1331.0 L1832.0 1331.0Z" fill="#4fb0a1" fill-opacity=".3" stroke="#4fb0a1" stroke-width="3.8" stroke-linejoin="miter" clip-path="url(#cr)"/>
<path d="M1835.0 1143.4H2768.0" stroke="#b5c9d6" stroke-opacity=".6" stroke-width="1.8" stroke-dasharray="1.8 1.8" fill="none"/>
<path d="M2602.3 955.9V1331.0" stroke="#d9dade" stroke-width="2" stroke-dasharray="1.8 1.8" fill="none"/>
<clipPath id="hv4"><circle cx="2602.3" cy="978.6" r="9.8"/><circle cx="2602.3" cy="1059.2" r="9.8"/></clipPath>
<circle cx="2602.3" cy="978.6" r="9.8" fill="#4784f0"/>
<circle cx="2602.3" cy="1059.2" r="9.8" fill="#4fb0a1"/>
<path d="M2602.3 955.9V1331.0" stroke="#eef1f8" stroke-width="2" stroke-dasharray="1.8 1.8" fill="none" clip-path="url(#hv4)"/>
<path d="M672.0 1569.6H1610.0" stroke="#d9d9dc" stroke-width="1.8" stroke-dasharray="1.8 1.8" fill="none"/>
<path d="M672.0 1609.3C674.2 1602.8 676.4 1596.3 678.5 1596.3C680.7 1596.3 682.9 1596.3 685.1 1596.3C687.2 1596.3 689.4 1609.3 691.6 1609.3C693.8 1609.3 695.9 1596.3 698.1 1596.3C700.3 1596.3 702.5 1596.3 704.6 1596.3C706.8 1596.3 709.0 1609.3 711.2 1609.3C713.3 1609.3 715.5 1603.0 717.7 1603.0C719.9 1603.0 722.0 1609.3 724.2 1609.3C726.4 1609.3 728.6 1609.3 730.8 1609.3C732.9 1609.3 735.1 1609.3 737.3 1609.3C739.5 1609.3 741.6 1603.0 743.8 1603.0C746.0 1603.0 748.2 1609.3 750.3 1609.3C752.5 1609.3 754.7 1596.3 756.9 1596.3C759.0 1596.3 761.2 1609.3 763.4 1609.3C765.6 1609.3 767.7 1609.3 769.9 1609.3C772.1 1609.3 774.3 1609.3 776.4 1609.3C778.6 1609.3 780.8 1609.3 783.0 1609.3C785.1 1609.3 787.3 1609.3 789.5 1609.3C791.7 1609.3 793.9 1596.3 796.0 1596.3C798.2 1596.3 800.4 1609.3 802.6 1609.3C804.7 1609.3 806.9 1609.3 809.1 1609.3C811.3 1609.3 813.4 1596.3 815.6 1596.3C817.8 1596.3 820.0 1609.3 822.1 1609.3C824.3 1609.3 826.5 1609.3 828.7 1609.3C830.8 1609.3 833.0 1609.3 835.2 1609.3C837.4 1609.3 839.5 1609.3 841.7 1609.3C843.9 1609.3 846.1 1609.3 848.2 1609.3C850.4 1609.3 852.6 1596.3 854.8 1596.3C857.0 1596.3 859.1 1609.3 861.3 1609.3C863.5 1609.3 865.7 1609.3 867.8 1609.3C870.0 1609.3 872.2 1596.3 874.4 1596.3C876.5 1596.3 878.7 1609.3 880.9 1609.3C883.1 1609.3 885.2 1609.3 887.4 1609.3C889.6 1609.3 891.8 1596.3 893.9 1596.3C896.1 1596.3 898.3 1609.3 900.5 1609.3C902.6 1609.3 904.8 1609.3 907.0 1609.3C909.2 1609.3 911.4 1609.3 913.5 1609.3C915.7 1609.3 917.9 1609.3 920.1 1609.3C922.2 1609.3 924.4 1609.3 926.6 1609.3C928.8 1609.3 930.9 1609.3 933.1 1609.3C935.3 1609.3 937.5 1609.3 939.6 1609.3C941.8 1609.3 944.0 1609.3 946.2 1609.3C948.3 1609.3 950.5 1596.3 952.7 1596.3C954.9 1596.3 957.0 1609.3 959.2 1609.3C961.4 1609.3 963.6 1609.3 965.8 1609.3C967.9 1609.3 970.1 1609.3 972.3 1609.3C974.5 1609.3 976.6 1609.3 978.8 1609.3C981.0 1609.3 983.2 1609.3 985.3 1609.3C987.5 1609.3 989.7 1603.0 991.9 1603.0C994.0 1603.0 996.2 1609.3 998.4 1609.3C1000.6 1609.3 1002.7 1609.3 1004.9 1609.3C1007.1 1609.3 1009.3 1596.3 1011.4 1596.3C1013.6 1596.3 1015.8 1609.3 1018.0 1609.3C1020.1 1609.3 1022.3 1609.3 1024.5 1609.3C1026.7 1609.3 1028.9 1609.3 1031.0 1609.3C1033.2 1609.3 1035.4 1609.3 1037.6 1609.3C1039.7 1609.3 1041.9 1609.3 1044.1 1609.3C1046.3 1609.3 1048.4 1596.3 1050.6 1596.3C1052.8 1596.3 1055.0 1609.3 1057.1 1609.3C1059.3 1609.3 1061.5 1609.3 1063.7 1609.3C1065.8 1609.3 1068.0 1596.3 1070.2 1596.3C1072.4 1596.3 1074.5 1609.3 1076.7 1609.3C1078.9 1609.3 1081.1 1609.3 1083.2 1609.3C1085.4 1609.3 1087.6 1596.3 1089.8 1596.3C1092.0 1596.3 1094.1 1609.3 1096.3 1609.3C1098.5 1609.3 1100.7 1609.3 1102.8 1609.3C1105.0 1609.3 1107.2 1596.3 1109.4 1596.3C1111.5 1596.3 1113.7 1609.3 1115.9 1609.3C1118.1 1609.3 1120.2 1609.3 1122.4 1609.3C1124.6 1609.3 1126.8 1596.3 1128.9 1596.3C1131.1 1596.3 1133.3 1609.3 1135.5 1609.3C1137.6 1609.3 1139.8 1596.3 1142.0 1596.3C1144.2 1596.3 1146.4 1596.3 1148.5 1596.3C1150.7 1596.3 1152.9 1609.3 1155.1 1609.3C1157.2 1609.3 1159.4 1609.3 1161.6 1609.3C1163.8 1609.3 1165.9 1609.3 1168.1 1609.3C1170.3 1609.3 1172.5 1609.3 1174.6 1609.3C1176.8 1609.3 1179.0 1596.3 1181.2 1596.3C1183.3 1596.3 1185.5 1609.3 1187.7 1609.3C1189.9 1609.3 1192.0 1609.3 1194.2 1609.3C1196.4 1609.3 1198.6 1609.3 1200.8 1609.3C1202.9 1609.3 1205.1 1609.3 1207.3 1609.3C1209.5 1609.3 1211.6 1609.3 1213.8 1609.3C1216.0 1609.3 1218.2 1596.3 1220.3 1596.3C1222.5 1596.3 1224.7 1609.3 1226.9 1609.3C1229.0 1609.3 1231.2 1609.3 1233.4 1609.3C1235.6 1609.3 1237.7 1596.3 1239.9 1596.3C1242.1 1596.3 1244.3 1609.3 1246.4 1609.3C1248.6 1609.3 1250.8 1609.3 1253.0 1609.3C1255.1 1609.3 1257.3 1609.3 1259.5 1609.3C1261.7 1609.3 1263.9 1609.3 1266.0 1609.3C1268.2 1609.3 1270.4 1609.3 1272.6 1609.3C1274.7 1609.3 1276.9 1596.3 1279.1 1596.3C1281.3 1596.3 1283.4 1609.3 1285.6 1609.3C1287.8 1609.3 1290.0 1609.3 1292.1 1609.3C1294.3 1609.3 1296.5 1596.3 1298.7 1596.3C1300.8 1596.3 1303.0 1609.3 1305.2 1609.3C1307.4 1609.3 1309.5 1609.3 1311.7 1609.3C1313.9 1609.3 1316.1 1596.3 1318.2 1596.3C1320.4 1596.3 1322.6 1609.3 1324.8 1609.3C1327.0 1609.3 1329.1 1609.3 1331.3 1609.3C1333.5 1609.3 1335.7 1603.0 1337.8 1603.0C1340.0 1603.0 1342.2 1609.3 1344.4 1609.3C1346.5 1609.3 1348.7 1609.3 1350.9 1609.3C1353.1 1609.3 1355.2 1596.3 1357.4 1596.3C1359.6 1596.3 1361.8 1609.3 1363.9 1609.3C1366.1 1609.3 1368.3 1609.3 1370.5 1609.3C1372.6 1609.3 1374.8 1596.3 1377.0 1596.3C1379.2 1596.3 1381.4 1609.3 1383.5 1609.3C1385.7 1609.3 1387.9 1609.3 1390.1 1609.3C1392.2 1609.3 1394.4 1596.3 1396.6 1596.3C1398.8 1596.3 1400.9 1609.3 1403.1 1609.3C1405.3 1609.3 1407.5 1609.3 1409.6 1609.3C1411.8 1609.3 1414.0 1596.3 1416.2 1596.3C1418.3 1596.3 1420.5 1609.3 1422.7 1609.3C1424.9 1609.3 1427.0 1609.3 1429.2 1609.3C1431.4 1609.3 1433.6 1596.3 1435.8 1596.3C1437.9 1596.3 1440.1 1609.3 1442.3 1609.3C1444.5 1609.3 1446.6 1609.3 1448.8 1609.3C1451.0 1609.3 1453.2 1596.3 1455.3 1596.3C1457.5 1596.3 1459.7 1609.3 1461.9 1609.3C1464.0 1609.3 1466.2 1609.3 1468.4 1609.3C1470.6 1609.3 1472.7 1596.3 1474.9 1596.3C1477.1 1596.3 1479.3 1609.3 1481.4 1609.3C1483.6 1609.3 1485.8 1609.3 1488.0 1609.3C1490.1 1609.3 1492.3 1596.3 1494.5 1596.3C1496.7 1596.3 1498.9 1609.3 1501.0 1609.3C1503.2 1609.3 1505.4 1596.3 1507.6 1596.3C1509.7 1596.3 1511.9 1596.3 1514.1 1596.3C1516.3 1596.3 1518.4 1609.3 1520.6 1609.3C1522.8 1609.3 1525.0 1609.3 1527.1 1609.3C1529.3 1609.3 1531.5 1596.3 1533.7 1596.3C1535.8 1596.3 1538.0 1609.3 1540.2 1609.3C1542.4 1609.3 1544.5 1596.3 1546.7 1596.3C1548.9 1596.3 1551.1 1596.3 1553.2 1596.3C1555.4 1596.3 1557.6 1609.3 1559.8 1609.3C1562.0 1609.3 1564.1 1609.3 1566.3 1609.3C1568.5 1609.3 1570.7 1596.3 1572.8 1596.3C1575.0 1596.3 1577.2 1609.3 1579.4 1609.3C1581.5 1609.3 1583.7 1596.3 1585.9 1596.3C1588.1 1596.3 1590.2 1596.3 1592.4 1596.3C1594.6 1596.3 1596.8 1609.3 1598.9 1609.3C1601.1 1609.3 1603.3 1609.3 1605.5 1609.3C1607.6 1609.3 1609.8 1602.8 1612.0 1596.3" fill="none" stroke="#4784f0" stroke-width="3.2" stroke-linejoin="round" stroke-linecap="round" clip-path="url(#cl)"/>
<path d="M672.0 1612.0C674.2 1611.6 676.4 1611.3 678.5 1611.3C680.7 1611.3 682.9 1613.1 685.1 1613.1C687.2 1613.1 689.4 1611.5 691.6 1611.4C693.8 1611.3 695.9 1611.3 698.1 1611.2C700.3 1611.1 702.5 1610.9 704.6 1610.9C706.8 1610.9 709.0 1611.8 711.2 1611.8C713.3 1611.8 715.5 1611.2 717.7 1611.2C719.9 1611.2 722.0 1611.9 724.2 1611.9C726.4 1611.9 728.6 1610.7 730.8 1610.7C732.9 1610.7 735.1 1611.9 737.3 1611.9C739.5 1611.9 741.6 1610.6 743.8 1610.6C746.0 1610.6 748.2 1610.9 750.3 1611.0C752.5 1611.2 754.7 1611.4 756.9 1611.4C759.0 1611.4 761.2 1610.7 763.4 1610.7C765.6 1610.7 767.7 1610.8 769.9 1610.8C772.1 1610.9 774.3 1611.7 776.4 1611.7C778.6 1611.7 780.8 1610.8 783.0 1610.8C785.1 1610.8 787.3 1611.1 789.5 1611.1C791.7 1611.1 793.9 1611.1 796.0 1611.0C798.2 1611.0 800.4 1610.8 802.6 1610.8C804.7 1610.8 806.9 1613.1 809.1 1613.1C811.3 1613.1 813.4 1611.7 815.6 1611.3C817.8 1610.9 820.0 1610.6 822.1 1610.6C824.3 1610.6 826.5 1610.6 828.7 1610.7C830.8 1610.7 833.0 1611.3 835.2 1611.3C837.4 1611.3 839.5 1610.9 841.7 1610.9C843.9 1610.9 846.1 1611.2 848.2 1611.3C850.4 1611.4 852.6 1611.4 854.8 1611.4C857.0 1611.5 859.1 1612.4 861.3 1612.4C863.5 1612.4 865.7 1611.6 867.8 1611.4C870.0 1611.1 872.2 1610.8 874.4 1610.8C876.5 1610.8 878.7 1611.6 880.9 1611.6C883.1 1611.6 885.2 1610.8 887.4 1610.8C889.6 1610.7 891.8 1610.6 893.9 1610.6C896.1 1610.6 898.3 1612.4 900.5 1612.4C902.6 1612.4 904.8 1611.4 907.0 1611.1C909.2 1610.8 911.4 1610.6 913.5 1610.6C915.7 1610.6 917.9 1610.6 920.1 1610.6C922.2 1610.7 924.4 1611.6 926.6 1611.6C928.8 1611.6 930.9 1610.6 933.1 1610.6C935.3 1610.6 937.5 1611.0 939.6 1611.0C941.8 1611.0 944.0 1610.7 946.2 1610.7C948.3 1610.7 950.5 1611.9 952.7 1611.9C954.9 1611.9 957.0 1611.6 959.2 1611.6C961.4 1611.6 963.6 1611.9 965.8 1611.9C967.9 1611.9 970.1 1611.9 972.3 1611.8C974.5 1611.8 976.6 1610.7 978.8 1610.7C981.0 1610.7 983.2 1613.1 985.3 1613.1C987.5 1613.1 989.7 1611.2 991.9 1611.0C994.0 1610.8 996.2 1610.7 998.4 1610.7C1000.6 1610.7 1002.7 1610.9 1004.9 1610.9C1007.1 1610.9 1009.3 1610.7 1011.4 1610.7C1013.6 1610.7 1015.8 1611.8 1018.0 1611.8C1020.1 1611.8 1022.3 1610.9 1024.5 1610.9C1026.7 1610.9 1028.9 1612.2 1031.0 1612.2C1033.2 1612.2 1035.4 1610.8 1037.6 1610.8C1039.7 1610.8 1041.9 1611.8 1044.1 1611.8C1046.3 1611.8 1048.4 1611.8 1050.6 1611.8C1052.8 1611.7 1055.0 1611.7 1057.1 1611.6C1059.3 1611.5 1061.5 1611.3 1063.7 1611.2C1065.8 1611.1 1068.0 1611.0 1070.2 1611.0C1072.4 1611.0 1074.5 1611.2 1076.7 1611.3C1078.9 1611.4 1081.1 1611.6 1083.2 1611.7C1085.4 1611.8 1087.6 1611.9 1089.8 1611.9C1092.0 1611.9 1094.1 1611.2 1096.3 1611.1C1098.5 1610.9 1100.7 1610.9 1102.8 1610.9C1105.0 1610.9 1107.2 1611.2 1109.4 1611.3C1111.5 1611.4 1113.7 1611.6 1115.9 1611.6C1118.1 1611.6 1120.2 1610.9 1122.4 1610.7C1124.6 1610.6 1126.8 1610.6 1128.9 1610.6C1131.1 1610.6 1133.3 1610.7 1135.5 1610.9C1137.6 1611.0 1139.8 1611.9 1142.0 1611.9C1144.2 1611.9 1146.4 1611.4 1148.5 1611.4C1150.7 1611.4 1152.9 1611.8 1155.1 1611.8C1157.2 1611.8 1159.4 1610.7 1161.6 1610.7C1163.8 1610.7 1165.9 1610.9 1168.1 1611.1C1170.3 1611.3 1172.5 1611.8 1174.6 1611.8C1176.8 1611.8 1179.0 1610.8 1181.2 1610.8C1183.3 1610.8 1185.5 1611.8 1187.7 1611.8C1189.9 1611.8 1192.0 1611.0 1194.2 1611.0C1196.4 1611.0 1198.6 1611.0 1200.8 1611.0C1202.9 1611.0 1205.1 1611.3 1207.3 1611.3C1209.5 1611.3 1211.6 1610.8 1213.8 1610.8C1216.0 1610.8 1218.2 1611.0 1220.3 1611.2C1222.5 1611.3 1224.7 1611.7 1226.9 1611.8C1229.0 1611.9 1231.2 1612.0 1233.4 1612.0C1235.6 1612.0 1237.7 1611.4 1239.9 1611.4C1242.1 1611.4 1244.3 1611.5 1246.4 1611.6C1248.6 1611.7 1250.8 1612.2 1253.0 1612.2C1255.1 1612.2 1257.3 1611.6 1259.5 1611.4C1261.7 1611.2 1263.9 1611.0 1266.0 1611.0C1268.2 1611.0 1270.4 1611.0 1272.6 1611.1C1274.7 1611.2 1276.9 1611.3 1279.1 1611.5C1281.3 1611.8 1283.4 1613.1 1285.6 1613.1C1287.8 1613.1 1290.0 1611.2 1292.1 1611.2C1294.3 1611.2 1296.5 1611.9 1298.7 1612.1C1300.8 1612.4 1303.0 1612.9 1305.2 1612.9C1307.4 1612.9 1309.5 1611.6 1311.7 1611.3C1313.9 1610.9 1316.1 1610.7 1318.2 1610.7C1320.4 1610.7 1322.6 1611.3 1324.8 1611.4C1327.0 1611.4 1329.1 1611.4 1331.3 1611.4C1333.5 1611.4 1335.7 1610.7 1337.8 1610.7C1340.0 1610.7 1342.2 1612.2 1344.4 1612.2C1346.5 1612.2 1348.7 1611.7 1350.9 1611.7C1353.1 1611.7 1355.2 1612.8 1357.4 1612.8C1359.6 1612.8 1361.8 1612.0 1363.9 1611.7C1366.1 1611.4 1368.3 1611.2 1370.5 1611.2C1372.6 1611.1 1374.8 1611.1 1377.0 1611.1C1379.2 1611.1 1381.4 1610.7 1383.5 1610.6C1385.7 1610.6 1387.9 1610.6 1390.1 1610.6C1392.2 1610.6 1394.4 1611.5 1396.6 1611.5C1398.8 1611.6 1400.9 1611.7 1403.1 1611.7C1405.3 1611.7 1407.5 1610.9 1409.6 1610.9C1411.8 1610.9 1414.0 1611.1 1416.2 1611.1C1418.3 1611.2 1420.5 1611.2 1422.7 1611.2C1424.9 1611.3 1427.0 1611.4 1429.2 1611.4C1431.4 1611.4 1433.6 1611.0 1435.8 1610.8C1437.9 1610.7 1440.1 1610.5 1442.3 1610.5C1444.5 1610.5 1446.6 1610.6 1448.8 1610.8C1451.0 1611.0 1453.2 1611.8 1455.3 1611.8C1457.5 1611.8 1459.7 1611.0 1461.9 1611.0C1464.0 1611.0 1466.2 1611.0 1468.4 1611.0C1470.6 1611.0 1472.7 1611.8 1474.9 1611.8C1477.1 1611.8 1479.3 1611.5 1481.4 1611.5C1483.6 1611.5 1485.8 1611.9 1488.0 1611.9C1490.1 1611.9 1492.3 1611.7 1494.5 1611.7C1496.7 1611.7 1498.9 1611.7 1501.0 1611.7C1503.2 1611.7 1505.4 1611.6 1507.6 1611.5C1509.7 1611.4 1511.9 1610.9 1514.1 1610.9C1516.3 1610.9 1518.4 1612.7 1520.6 1612.7C1522.8 1612.7 1525.0 1612.1 1527.1 1611.8C1529.3 1611.4 1531.5 1610.5 1533.7 1610.5C1535.8 1610.5 1538.0 1611.7 1540.2 1611.8C1542.4 1611.9 1544.5 1612.0 1546.7 1612.0C1548.9 1612.0 1551.1 1610.6 1553.2 1610.6C1555.4 1610.6 1557.6 1611.0 1559.8 1611.4C1562.0 1611.8 1564.1 1612.8 1566.3 1612.8C1568.5 1612.8 1570.7 1611.3 1572.8 1611.3C1575.0 1611.3 1577.2 1611.4 1579.4 1611.6C1581.5 1611.9 1583.7 1613.0 1585.9 1613.0C1588.1 1613.0 1590.2 1611.7 1592.4 1611.7C1594.6 1611.7 1596.8 1611.8 1598.9 1611.8C1601.1 1611.8 1603.3 1610.9 1605.5 1610.8C1607.6 1610.6 1609.8 1610.6 1612.0 1610.5" fill="none" stroke="#4fb0a1" stroke-width="3.6" stroke-linejoin="round" stroke-linecap="round" clip-path="url(#cl)"/>
<path d="M1442.3 1569.6V1740.0" stroke="#d9dade" stroke-width="2" stroke-dasharray="1.8 1.8" fill="none"/>
<clipPath id="hv5"><circle cx="1442.3" cy="1612.4" r="9.8"/></clipPath>
<circle cx="1442.3" cy="1612.4" r="9.8" fill="#4fb0a1"/>
<path d="M1442.3 1569.6V1740.0" stroke="#eef1f8" stroke-width="2" stroke-dasharray="1.8 1.8" fill="none" clip-path="url(#hv5)"/>
</svg>
<div id="txt" style="position:absolute;left:0;top:0;width:2842px;height:1732px;z-index:10;will-change:transform;pointer-events:none">
<span class="t" id="t0" style="top:27.15px;font-size:22.5px;color:#000;-webkit-text-stroke:0.7px #000;z-index:9;left:127.30px;transform:translateX(-50%);">D</span>
<span class="t" id="t1" style="top:26.53px;font-size:25.6px;color:#69707d;-webkit-text-stroke:0.22px #69707d;letter-spacing:-0.224px;z-index:9;left:199.24px;">APM</span>
<span class="t" id="t2" style="top:26.53px;font-size:25.6px;color:#69707d;-webkit-text-stroke:0.22px #69707d;letter-spacing:0.683px;z-index:9;left:285.04px;">Services</span>
<span class="t" id="t3" style="top:26.53px;font-size:25.6px;color:#69707d;-webkit-text-stroke:0.22px #69707d;letter-spacing:0.657px;z-index:9;left:417.64px;">opbeans-java</span>
<span class="t" id="t4" style="top:26.53px;font-size:25.6px;color:#343741;-webkit-text-stroke:0.45px #343741;letter-spacing:1.459px;z-index:9;left:609.04px;">Metrics</span>
<span class="t" id="t5" style="top:108.00px;font-size:29.3px;color:#343741;-webkit-text-stroke:0.22px #343741;letter-spacing:0.687px;left:154.30px;">Transactions</span>
<span class="t" id="t6" style="top:108.00px;font-size:29.3px;color:#343741;-webkit-text-stroke:0.22px #343741;letter-spacing:0.326px;left:385.30px;">Errors</span>
<span class="t" id="t7" style="top:108.00px;font-size:29.3px;color:#2a6cb5;-webkit-text-stroke:0.22px #2a6cb5;letter-spacing:1.349px;left:523.60px;">Metrics</span>
<span class="t" id="t8" style="top:217.62px;font-size:36.6px;color:#1a1c21;-webkit-text-stroke:0.9px #1a1c21;letter-spacing:0.361px;left:125.63px;">Filters</span>
<span class="t" id="t9" style="top:301.87px;font-size:22.6px;color:#1a1c21;font-weight:700;letter-spacing:-0.290px;left:126.65px;">HOST</span>
<span class="t" id="t10" style="top:375.77px;font-size:22.6px;color:#1a1c21;font-weight:700;letter-spacing:-0.782px;left:126.65px;">CONTAINER ID</span>
<span class="t" id="t11" style="top:449.87px;font-size:22.6px;color:#1a1c21;font-weight:700;letter-spacing:-0.737px;left:126.65px;">POD</span>
<span class="t" id="t12" style="top:246.20px;font-size:29.3px;color:#1a1c21;font-weight:700;letter-spacing:-0.747px;left:528.40px;">CPU usage</span>
<span class="t" id="t13" style="top:246.20px;font-size:29.3px;color:#1a1c21;font-weight:700;letter-spacing:-0.543px;left:1687.70px;">System memory usage</span>
<span class="t" id="t14" style="top:891.90px;font-size:29.3px;color:#1a1c21;font-weight:700;letter-spacing:-0.193px;left:528.10px;">Heap Memory</span>
<span class="t" id="t15" style="top:891.90px;font-size:29.3px;color:#1a1c21;font-weight:700;letter-spacing:-0.045px;left:1687.70px;">Non-Heap Memory</span>
<span class="t" id="t16" style="top:1506.00px;font-size:29.3px;color:#1a1c21;font-weight:700;letter-spacing:-0.366px;left:528.30px;">Thread Count</span>
<span class="t" id="t17" style="top:297.42px;font-size:21.6px;color:#69707d;-webkit-text-stroke:0.22px #69707d;letter-spacing:-1.426px;right:2186.82px;">100.0%</span>
<span class="t" id="t18" style="top:484.12px;font-size:21.6px;color:#69707d;-webkit-text-stroke:0.22px #69707d;letter-spacing:-0.979px;right:2186.37px;">50.0%</span>
<span class="t" id="t19" style="top:670.72px;font-size:21.6px;color:#69707d;-webkit-text-stroke:0.22px #69707d;letter-spacing:-1.300px;right:2186.69px;">0.0%</span>
<div style="position:absolute;left:0;top:0;width:1612px;height:1732px;overflow:hidden;pointer-events:none"><span class="t" id="t20" style="top:693.82px;font-size:21.6px;color:#69707d;-webkit-text-stroke:0.22px #69707d;letter-spacing:-0.475px;left:775.96px;transform:translateX(-50%);">06 PM</span></div>
<div style="position:absolute;left:0;top:0;width:1612px;height:1732px;overflow:hidden;pointer-events:none"><span class="t" id="t21" style="top:693.82px;font-size:21.6px;color:#69707d;-webkit-text-stroke:0.22px #69707d;letter-spacing:-0.375px;left:893.46px;transform:translateX(-50%);">09 PM</span></div>
<div style="position:absolute;left:0;top:0;width:1612px;height:1732px;overflow:hidden;pointer-events:none"><span class="t" id="t22" style="top:693.82px;font-size:21.6px;color:#69707d;-webkit-text-stroke:0.22px #69707d;letter-spacing:-0.137px;left:1011.03px;transform:translateX(-50%);">Fri 20</span></div>
<div style="position:absolute;left:0;top:0;width:1612px;height:1732px;overflow:hidden;pointer-events:none"><span class="t" id="t23" style="top:693.82px;font-size:21.6px;color:#69707d;-webkit-text-stroke:0.22px #69707d;letter-spacing:0.325px;left:1128.71px;transform:translateX(-50%);">03 AM</span></div>
<div style="position:absolute;left:0;top:0;width:1612px;height:1732px;overflow:hidden;pointer-events:none"><span class="t" id="t24" style="top:693.82px;font-size:21.6px;color:#69707d;-webkit-text-stroke:0.22px #69707d;letter-spacing:0.225px;left:1246.11px;transform:translateX(-50%);">06 AM</span></div>
<div style="position:absolute;left:0;top:0;width:1612px;height:1732px;overflow:hidden;pointer-events:none"><span class="t" id="t25" style="top:693.82px;font-size:21.6px;color:#69707d;-webkit-text-stroke:0.22px #69707d;letter-spacing:0.225px;left:1363.56px;transform:translateX(-50%);">09 AM</span></div>
<div style="position:absolute;left:0;top:0;width:1612px;height:1732px;overflow:hidden;pointer-events:none"><span class="t" id="t26" style="top:693.82px;font-size:21.6px;color:#69707d;-webkit-text-stroke:0.22px #69707d;letter-spacing:-1.475px;left:1480.16px;transform:translateX(-50%);">12 PM</span></div>
<div style="position:absolute;left:0;top:0;width:1612px;height:1732px;overflow:hidden;pointer-events:none"><span class="t" id="t27" style="top:693.82px;font-size:21.6px;color:#69707d;-webkit-text-stroke:0.22px #69707d;letter-spacing:-0.450px;left:1598.12px;transform:translateX(-50%);">03 PM</span></div>
<span class="t" id="t28" style="top:409.16px;font-size:25.8px;color:#98a2b3;-webkit-text-stroke:0.22px #98a2b3;letter-spacing:0.260px;z-index:4;left:1029.33px;">September 20th 2019, 11:00:00</span>
<span class="t" id="t29" style="top:463.58px;font-size:22px;color:#98a2b3;-webkit-text-stroke:0.22px #98a2b3;letter-spacing:0.269px;z-index:4;left:1051.08px;">System max</span>
<span class="t" id="t30" style="top:462.50px;font-size:25.4px;color:#69707d;-webkit-text-stroke:0.22px #69707d;letter-spacing:-1.674px;z-index:4;right:1460.82px;">33.1%</span>
<span class="t" id="t31" style="top:495.28px;font-size:22px;color:#98a2b3;-webkit-text-stroke:0.22px #98a2b3;letter-spacing:0.268px;z-index:4;left:1051.08px;">System average</span>
<span class="t" id="t32" style="top:494.50px;font-size:25.4px;color:#69707d;-webkit-text-stroke:0.22px #69707d;letter-spacing:-0.174px;z-index:4;right:1459.32px;">29.8%</span>
<span class="t" id="t33" style="top:525.88px;font-size:22px;color:#98a2b3;-webkit-text-stroke:0.22px #98a2b3;letter-spacing:0.209px;z-index:4;left:1051.08px;">Process max</span>
<span class="t" id="t34" style="top:524.80px;font-size:25.4px;color:#69707d;-webkit-text-stroke:0.22px #69707d;letter-spacing:-0.057px;z-index:4;right:1459.20px;">0.4%</span>
<span class="t" id="t35" style="top:557.58px;font-size:22px;color:#98a2b3;-webkit-text-stroke:0.22px #98a2b3;letter-spacing:0.204px;z-index:4;left:1051.08px;">Process average</span>
<span class="t" id="t36" style="top:556.80px;font-size:25.4px;color:#69707d;-webkit-text-stroke:0.22px #69707d;letter-spacing:-0.490px;z-index:4;right:1459.64px;">0.3%</span>
<span class="t" id="t37" style="top:751.88px;font-size:22px;color:#98a2b3;-webkit-text-stroke:0.22px #98a2b3;letter-spacing:0.247px;left:702.38px;">System max</span>
<span class="t" id="t38" style="top:751.88px;font-size:22px;color:#000;letter-spacing:-0.385px;left:832.97px;">48.6%</span>
<span class="t" id="t39" style="top:751.88px;font-size:22px;color:#98a2b3;-webkit-text-stroke:0.22px #98a2b3;letter-spacing:0.252px;left:953.27px;">System average</span>
<span class="t" id="t40" style="top:751.88px;font-size:22px;color:#000;letter-spacing:-0.110px;left:1122.67px;">30.8%</span>
<span class="t" id="t41" style="top:751.88px;font-size:22px;color:#98a2b3;-webkit-text-stroke:0.22px #98a2b3;letter-spacing:0.229px;left:1243.17px;">Process max</span>
<span class="t" id="t42" style="top:751.88px;font-size:22px;color:#000;letter-spacing:-0.169px;left:1379.17px;">0.9%</span>
<span class="t" id="t43" style="top:787.88px;font-size:22px;color:#98a2b3;-webkit-text-stroke:0.22px #98a2b3;letter-spacing:0.183px;left:702.38px;">Process average</span>
<span class="t" id="t44" style="top:787.88px;font-size:22px;color:#000;letter-spacing:-0.302px;left:876.77px;">0.3%</span>
<span class="t" id="t45" style="top:297.52px;font-size:21.6px;color:#69707d;-webkit-text-stroke:0.22px #69707d;letter-spacing:-1.426px;right:1026.92px;">100.0%</span>
<span class="t" id="t46" style="top:483.82px;font-size:21.6px;color:#69707d;-webkit-text-stroke:0.22px #69707d;letter-spacing:-0.979px;right:1026.47px;">50.0%</span>
<span class="t" id="t47" style="top:670.72px;font-size:21.6px;color:#69707d;-webkit-text-stroke:0.22px #69707d;letter-spacing:-1.300px;right:1026.79px;">0.0%</span>
<div style="position:absolute;left:0;top:0;width:2772px;height:1732px;overflow:hidden;pointer-events:none"><span class="t" id="t48" style="top:693.82px;font-size:21.6px;color:#69707d;-webkit-text-stroke:0.22px #69707d;letter-spacing:-0.475px;left:1935.96px;transform:translateX(-50%);">06 PM</span></div>
<div style="position:absolute;left:0;top:0;width:2772px;height:1732px;overflow:hidden;pointer-events:none"><span class="t" id="t49" style="top:693.82px;font-size:21.6px;color:#69707d;-webkit-text-stroke:0.22px #69707d;letter-spacing:-0.375px;left:2053.46px;transform:translateX(-50%);">09 PM</span></div>
<div style="position:absolute;left:0;top:0;width:2772px;height:1732px;overflow:hidden;pointer-events:none"><span class="t" id="t50" style="top:693.82px;font-size:21.6px;color:#69707d;-webkit-text-stroke:0.22px #69707d;letter-spacing:-0.137px;left:2171.03px;transform:translateX(-50%);">Fri 20</span></div>
<div style="position:absolute;left:0;top:0;width:2772px;height:1732px;overflow:hidden;pointer-events:none"><span class="t" id="t51" style="top:693.82px;font-size:21.6px;color:#69707d;-webkit-text-stroke:0.22px #69707d;letter-spacing:0.325px;left:2288.71px;transform:translateX(-50%);">03 AM</span></div>
<div style="position:absolute;left:0;top:0;width:2772px;height:1732px;overflow:hidden;pointer-events:none"><span class="t" id="t52" style="top:693.82px;font-size:21.6px;color:#69707d;-webkit-text-stroke:0.22px #69707d;letter-spacing:0.225px;left:2406.11px;transform:translateX(-50%);">06 AM</span></div>
<div style="position:absolute;left:0;top:0;width:2772px;height:1732px;overflow:hidden;pointer-events:none"><span class="t" id="t53" style="top:693.82px;font-size:21.6px;color:#69707d;-webkit-text-stroke:0.22px #69707d;letter-spacing:0.225px;left:2523.56px;transform:translateX(-50%);">09 AM</span></div>
<div style="position:absolute;left:0;top:0;width:2772px;height:1732px;overflow:hidden;pointer-events:none"><span class="t" id="t54" style="top:693.82px;font-size:21.6px;color:#69707d;-webkit-text-stroke:0.22px #69707d;letter-spacing:-1.475px;left:2640.16px;transform:translateX(-50%);">12 PM</span></div>
<div style="position:absolute;left:0;top:0;width:2772px;height:1732px;overflow:hidden;pointer-events:none"><span class="t" id="t55" style="top:693.82px;font-size:21.6px;color:#69707d;-webkit-text-stroke:0.22px #69707d;letter-spacing:-0.450px;left:2758.12px;transform:translateX(-50%);">03 PM</span></div>
<span class="t" id="t56" style="top:440.16px;font-size:25.8px;color:#98a2b3;-webkit-text-stroke:0.22px #98a2b3;letter-spacing:0.260px;z-index:4;left:2188.08px;">September 20th 2019, 11:00:00</span>
<span class="t" id="t57" style="top:495.38px;font-size:22px;color:#98a2b3;-webkit-text-stroke:0.22px #98a2b3;letter-spacing:1.194px;z-index:4;left:2209.83px;">Max</span>
<span class="t" id="t58" style="top:493.90px;font-size:25.4px;color:#69707d;-webkit-text-stroke:0.22px #69707d;letter-spacing:0.001px;z-index:4;right:300.40px;">63.2%</span>
<span class="t" id="t59" style="top:527.38px;font-size:22px;color:#98a2b3;-webkit-text-stroke:0.22px #98a2b3;letter-spacing:0.301px;z-index:4;left:2209.83px;">Average</span>
<span class="t" id="t60" style="top:526.30px;font-size:25.4px;color:#69707d;-webkit-text-stroke:0.22px #69707d;letter-spacing:-1.624px;z-index:4;right:302.02px;">63.1%</span>
<span class="t" id="t61" style="top:751.88px;font-size:22px;color:#98a2b3;-webkit-text-stroke:0.22px #98a2b3;letter-spacing:1.044px;left:1861.17px;">Max</span>
<span class="t" id="t62" style="top:751.88px;font-size:22px;color:#000;letter-spacing:0.065px;left:1911.17px;">63.8%</span>
<span class="t" id="t63" style="top:751.88px;font-size:22px;color:#98a2b3;-webkit-text-stroke:0.22px #98a2b3;letter-spacing:0.267px;left:2031.88px;">Average</span>
<span class="t" id="t64" style="top:751.88px;font-size:22px;color:#000;letter-spacing:-0.185px;left:2121.58px;">62.7%</span>
<span class="t" id="t65" style="top:943.62px;font-size:21.6px;color:#69707d;-webkit-text-stroke:0.22px #69707d;letter-spacing:-1.219px;right:2186.61px;">10.0 GB</span>
<span class="t" id="t66" style="top:1131.02px;font-size:21.6px;color:#69707d;-webkit-text-stroke:0.22px #69707d;letter-spacing:-1.060px;right:2186.45px;">5.0 GB</span>
<span class="t" id="t67" style="top:1318.72px;font-size:21.6px;color:#69707d;-webkit-text-stroke:0.22px #69707d;letter-spacing:-0.780px;right:2186.17px;">0.0 GB</span>
<div style="position:absolute;left:0;top:0;width:1612px;height:1732px;overflow:hidden;pointer-events:none"><span class="t" id="t68" style="top:1341.72px;font-size:21.6px;color:#69707d;-webkit-text-stroke:0.22px #69707d;letter-spacing:-0.475px;left:775.96px;transform:translateX(-50%);">06 PM</span></div>
<div style="position:absolute;left:0;top:0;width:1612px;height:1732px;overflow:hidden;pointer-events:none"><span class="t" id="t69" style="top:1341.72px;font-size:21.6px;color:#69707d;-webkit-text-stroke:0.22px #69707d;letter-spacing:-0.375px;left:893.46px;transform:translateX(-50%);">09 PM</span></div>
<div style="position:absolute;left:0;top:0;width:1612px;height:1732px;overflow:hidden;pointer-events:none"><span class="t" id="t70" style="top:1341.72px;font-size:21.6px;color:#69707d;-webkit-text-stroke:0.22px #69707d;letter-spacing:-0.137px;left:1011.03px;transform:translateX(-50%);">Fri 20</span></div>
<div style="position:absolute;left:0;top:0;width:1612px;height:1732px;overflow:hidden;pointer-events:none"><span class="t" id="t71" style="top:1341.72px;font-size:21.6px;color:#69707d;-webkit-text-stroke:0.22px #69707d;letter-spacing:0.325px;left:1128.71px;transform:translateX(-50%);">03 AM</span></div>
<div style="position:absolute;left:0;top:0;width:1612px;height:1732px;overflow:hidden;pointer-events:none"><span class="t" id="t72" style="top:1341.72px;font-size:21.6px;color:#69707d;-webkit-text-stroke:0.22px #69707d;letter-spacing:0.225px;left:1246.11px;transform:translateX(-50%);">06 AM</span></div>
<div style="position:absolute;left:0;top:0;width:1612px;height:1732px;overflow:hidden;pointer-events:none"><span class="t" id="t73" style="top:1341.72px;font-size:21.6px;color:#69707d;-webkit-text-stroke:0.22px #69707d;letter-spacing:0.225px;left:1363.56px;transform:translateX(-50%);">09 AM</span></div>
<div style="position:absolute;left:0;top:0;width:1612px;height:1732px;overflow:hidden;pointer-events:none"><span class="t" id="t74" style="top:1341.72px;font-size:21.6px;color:#69707d;-webkit-text-stroke:0.22px #69707d;letter-spacing:-1.475px;left:1480.16px;transform:translateX(-50%);">12 PM</span></div>
<div style="position:absolute;left:0;top:0;width:1612px;height:1732px;overflow:hidden;pointer-events:none"><span class="t" id="t75" style="top:1341.72px;font-size:21.6px;color:#69707d;-webkit-text-stroke:0.22px #69707d;letter-spacing:-0.450px;left:1598.12px;transform:translateX(-50%);">03 PM</span></div>
<span class="t" id="t76" style="top:1070.56px;font-size:25.8px;color:#98a2b3;-webkit-text-stroke:0.22px #98a2b3;letter-spacing:0.260px;z-index:4;left:1029.33px;">September 20th 2019, 11:00:00</span>
<span class="t" id="t77" style="top:1127.28px;font-size:22px;color:#98a2b3;-webkit-text-stroke:0.22px #98a2b3;letter-spacing:0.212px;z-index:4;left:1051.08px;">Avg. used</span>
<span class="t" id="t78" style="top:1126.20px;font-size:25.4px;color:#69707d;-webkit-text-stroke:0.22px #69707d;letter-spacing:0.474px;z-index:4;right:1458.67px;">750.8 MB</span>
<span class="t" id="t79" style="top:1157.18px;font-size:22px;color:#98a2b3;-webkit-text-stroke:0.22px #98a2b3;letter-spacing:0.495px;z-index:4;left:1051.08px;">Avg. committed</span>
<span class="t" id="t80" style="top:1156.30px;font-size:25.4px;color:#69707d;-webkit-text-stroke:0.22px #69707d;letter-spacing:-1.468px;z-index:4;right:1460.62px;">2.1 GB</span>
<span class="t" id="t81" style="top:1188.48px;font-size:22px;color:#98a2b3;-webkit-text-stroke:0.22px #98a2b3;letter-spacing:0.201px;z-index:4;left:1051.08px;">Avg. limit</span>
<span class="t" id="t82" style="top:1188.30px;font-size:25.4px;color:#69707d;-webkit-text-stroke:0.22px #69707d;letter-spacing:-0.168px;z-index:4;right:1459.32px;">9.8 GB</span>
<span class="t" id="t83" style="top:1399.78px;font-size:22px;color:#98a2b3;-webkit-text-stroke:0.22px #98a2b3;letter-spacing:0.137px;left:701.88px;">Avg. used</span>
<span class="t" id="t84" style="top:1399.78px;font-size:22px;color:#000;letter-spacing:-0.047px;left:807.17px;">0.8 GB</span>
<span class="t" id="t85" style="top:1399.78px;font-size:22px;color:#98a2b3;-webkit-text-stroke:0.22px #98a2b3;letter-spacing:0.472px;left:933.17px;">Avg. committed</span>
<span class="t" id="t86" style="top:1399.78px;font-size:22px;color:#000;letter-spacing:-1.207px;left:1097.88px;">2.1 GB</span>
<span class="t" id="t87" style="top:1399.78px;font-size:22px;color:#98a2b3;-webkit-text-stroke:0.22px #98a2b3;letter-spacing:0.178px;left:1218.08px;">Avg. limit</span>
<span class="t" id="t88" style="top:1399.78px;font-size:22px;color:#000;letter-spacing:-0.167px;left:1315.88px;">9.8 GB</span>
<span class="t" id="t89" style="top:943.62px;font-size:21.6px;color:#69707d;-webkit-text-stroke:0.22px #69707d;letter-spacing:-0.774px;right:1026.26px;">160.0 MB</span>
<span class="t" id="t90" style="top:1131.12px;font-size:21.6px;color:#69707d;-webkit-text-stroke:0.22px #69707d;letter-spacing:-0.367px;right:1025.86px;">80.0 MB</span>
<span class="t" id="t91" style="top:1318.72px;font-size:21.6px;color:#69707d;-webkit-text-stroke:0.22px #69707d;letter-spacing:-0.480px;right:1025.97px;">0.0 MB</span>
<div style="position:absolute;left:0;top:0;width:2772px;height:1732px;overflow:hidden;pointer-events:none"><span class="t" id="t92" style="top:1341.72px;font-size:21.6px;color:#69707d;-webkit-text-stroke:0.22px #69707d;letter-spacing:-0.475px;left:1935.96px;transform:translateX(-50%);">06 PM</span></div>
<div style="position:absolute;left:0;top:0;width:2772px;height:1732px;overflow:hidden;pointer-events:none"><span class="t" id="t93" style="top:1341.72px;font-size:21.6px;color:#69707d;-webkit-text-stroke:0.22px #69707d;letter-spacing:-0.375px;left:2053.46px;transform:translateX(-50%);">09 PM</span></div>
<div style="position:absolute;left:0;top:0;width:2772px;height:1732px;overflow:hidden;pointer-events:none"><span class="t" id="t94" style="top:1341.72px;font-size:21.6px;color:#69707d;-webkit-text-stroke:0.22px #69707d;letter-spacing:-0.137px;left:2171.03px;transform:translateX(-50%);">Fri 20</span></div>
<div style="position:absolute;left:0;top:0;width:2772px;height:1732px;overflow:hidden;pointer-events:none"><span class="t" id="t95" style="top:1341.72px;font-size:21.6px;color:#69707d;-webkit-text-stroke:0.22px #69707d;letter-spacing:0.325px;left:2288.71px;transform:translateX(-50%);">03 AM</span></div>
<div style="position:absolute;left:0;top:0;width:2772px;height:1732px;overflow:hidden;pointer-events:none"><span class="t" id="t96" style="top:1341.72px;font-size:21.6px;color:#69707d;-webkit-text-stroke:0.22px #69707d;letter-spacing:0.225px;left:2406.11px;transform:translateX(-50%);">06 AM</span></div>
<div style="position:absolute;left:0;top:0;width:2772px;height:1732px;overflow:hidden;pointer-events:none"><span class="t" id="t97" style="top:1341.72px;font-size:21.6px;color:#69707d;-webkit-text-stroke:0.22px #69707d;letter-spacing:0.225px;left:2523.56px;transform:translateX(-50%);">09 AM</span></div>
<div style="position:absolute;left:0;top:0;width:2772px;height:1732px;overflow:hidden;pointer-events:none"><span class="t" id="t98" style="top:1341.72px;font-size:21.6px;color:#69707d;-webkit-text-stroke:0.22px #69707d;letter-spacing:-1.475px;left:2640.16px;transform:translateX(-50%);">12 PM</span></div>
<div style="position:absolute;left:0;top:0;width:2772px;height:1732px;overflow:hidden;pointer-events:none"><span class="t" id="t99" style="top:1341.72px;font-size:21.6px;color:#69707d;-webkit-text-stroke:0.22px #69707d;letter-spacing:-0.450px;left:2758.12px;transform:translateX(-50%);">03 PM</span></div>
<span class="t" id="t100" style="top:1086.16px;font-size:25.8px;color:#98a2b3;-webkit-text-stroke:0.22px #98a2b3;letter-spacing:0.260px;z-index:4;left:2188.13px;">September 20th 2019, 11:00:00</span>
<span class="t" id="t101" style="top:1143.38px;font-size:22px;color:#98a2b3;-webkit-text-stroke:0.22px #98a2b3;letter-spacing:0.212px;z-index:4;left:2209.88px;">Avg. used</span>
<span class="t" id="t102" style="top:1142.30px;font-size:25.4px;color:#69707d;-webkit-text-stroke:0.22px #69707d;letter-spacing:-1.313px;z-index:4;right:301.66px;">116.1 MB</span>
<span class="t" id="t103" style="top:1173.38px;font-size:22px;color:#98a2b3;-webkit-text-stroke:0.22px #98a2b3;letter-spacing:0.495px;z-index:4;left:2209.88px;">Avg. committed</span>
<span class="t" id="t104" style="top:1172.40px;font-size:25.4px;color:#69707d;-webkit-text-stroke:0.22px #69707d;letter-spacing:0.103px;z-index:4;right:300.25px;">150.5 MB</span>
<span class="t" id="t105" style="top:1399.78px;font-size:22px;color:#98a2b3;-webkit-text-stroke:0.22px #98a2b3;letter-spacing:0.212px;left:1861.17px;">Avg. used</span>
<span class="t" id="t106" style="top:1399.78px;font-size:22px;color:#000;letter-spacing:-0.514px;left:1966.47px;">115.8 MB</span>
<span class="t" id="t107" style="top:1399.78px;font-size:22px;color:#98a2b3;-webkit-text-stroke:0.22px #98a2b3;letter-spacing:0.502px;left:2113.78px;">Avg. committed</span>
<span class="t" id="t108" style="top:1399.78px;font-size:22px;color:#000;letter-spacing:0.025px;left:2278.18px;">150.5 MB</span>
<span class="t" id="t109" style="top:1557.32px;font-size:21.6px;color:#69707d;-webkit-text-stroke:0.22px #69707d;letter-spacing:-0.637px;right:2185.83px;">55.0</span>
<span class="t" id="t110" style="top:1700.06px;font-size:25.8px;color:#98a2b3;-webkit-text-stroke:0.22px #98a2b3;letter-spacing:0.260px;z-index:4;left:1029.43px;">September 20th 2019, 11:00:00</span>
</div>
</body></html>
